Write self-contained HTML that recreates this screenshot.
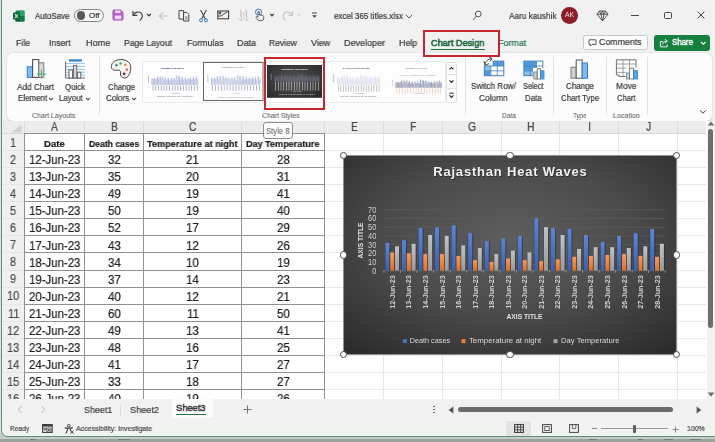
<!DOCTYPE html>
<html lang="en"><head><meta charset="utf-8"><title>excel 365 titles.xlsx - Excel</title>
<style>
html,body{margin:0;padding:0;}
body{width:715px;height:442px;position:relative;overflow:hidden;background:#f1f1f1;font-family:"Liberation Sans",sans-serif;}
.t{will-change:transform;-webkit-text-stroke:0.22px currentColor;position:absolute;white-space:nowrap;line-height:1;transform-origin:0 50%;display:block;}
.r{position:absolute;display:block;box-sizing:border-box;}
svg{overflow:visible;will-change:transform;}
svg text{font-family:"Liberation Sans",sans-serif;}
</style></head><body>
<div id="titlebar">
<div class="r" style="left:0.00px;top:0.00px;width:715.00px;height:54.00px;background:#f1f1f1;"></div>
<svg class="r" style="left:12.50px;top:9.50px;" width="12" height="12" viewBox="0 0 12 12"><rect x="2.5" y="0.5" width="9" height="11" rx="1.2" fill="#1a8a50"/><rect x="7" y="0.5" width="4.5" height="5.5" fill="#27a562"/><rect x="2.5" y="6" width="4.5" height="5.5" fill="#185c37"/><rect x="7" y="6" width="4.5" height="5.5" rx="0" fill="#107c41"/><rect x="0" y="2.6" width="7" height="7" rx="0.9" fill="#0f6b3a"/><text x="3.3" y="8.1" font-size="5.6" font-weight="bold" fill="#fff" text-anchor="middle">X</text></svg>
<span class="t" style="left:35.00px;top:11.70px;font-size:9.00px;color:#3a3a3a;transform:scaleX(0.8840);">AutoSave</span>
<div class="r" style="left:74.00px;top:8.60px;width:29.50px;height:13.80px;background:#f6f6f6;border:1px solid #858585;border-radius:7px;"></div>
<div class="r" style="left:77.30px;top:11.40px;width:8.20px;height:8.20px;background:#5a5a5a;border-radius:50%;"></div>
<span class="t" style="left:88.50px;top:12.19px;font-size:8.00px;color:#3a3a3a;transform:scaleX(0.9978);">Off</span>
<svg class="r" style="left:111.50px;top:9.00px;" width="12" height="12" viewBox="0 0 12 12"><path d="M1 1.8 a0.8 0.8 0 0 1 .8 -.8 H8.6 L11 3.4 V10.2 a.8 .8 0 0 1 -.8 .8 H1.8 a.8 .8 0 0 1 -.8 -.8 Z" fill="#b866c6" stroke="#a752b6" stroke-width="1"/><rect x="3" y="1.4" width="5.4" height="2.6" fill="#f0d9f3"/><rect x="2.8" y="6.6" width="6.4" height="3.6" fill="#f0d9f3"/></svg>
<svg class="r" style="left:131.00px;top:9.00px;" width="14" height="13" viewBox="0 0 14 13"><path d="M2 2 V6.3 H6.3" fill="none" stroke="#444" stroke-width="1.2"/><path d="M2.3 6 C4 3 8 2 10.3 4.3 C12.2 6.4 11.4 9.3 8.6 11.6" fill="none" stroke="#444" stroke-width="1.2"/></svg>
<svg class="r" style="left:146.00px;top:13.00px;" width="6" height="4" viewBox="0 0 6 4"><path d="M1.2 1 L3 2.8 L4.8 1" fill="none" stroke="#444" stroke-width="1.3"/></svg>
<svg class="r" style="left:157.50px;top:10.50px;" width="11" height="10" viewBox="0 0 11 10"><path d="M10 5 H1.5 M5 1.3 L1.3 5 L5 8.7" fill="none" stroke="#c2c2c2" stroke-width="1.1"/></svg>
<svg class="r" style="left:177.50px;top:9.00px;" width="12" height="13" viewBox="0 0 12 13"><path d="M1 1.6 H5.6 V10 H1 Z" fill="none" stroke="#444" stroke-width="1"/><path d="M5.6 3.4 H8.8 L10.8 5.4 V12 H5.6 Z" fill="#f1f1f1" stroke="#444" stroke-width="1"/><path d="M7.2 8 H9.4 M7.2 9.8 H9.4" stroke="#444" stroke-width=".8"/></svg>
<svg class="r" style="left:198.00px;top:8.50px;" width="11" height="14" viewBox="0 0 11 14"><path d="M2.6 1 L7.4 10 M8.4 1 L3.6 10" fill="none" stroke="#444" stroke-width="1.1"/><circle cx="3" cy="11.3" r="1.5" fill="none" stroke="#2b7bc4" stroke-width="1"/><circle cx="8" cy="11.3" r="1.5" fill="none" stroke="#2b7bc4" stroke-width="1"/></svg>
<svg class="r" style="left:217.00px;top:10.00px;" width="13" height="10" viewBox="0 0 13 10"><rect x=".8" y="1" width="10.8" height="7.8" fill="none" stroke="#444" stroke-width="1.1"/><path d="M1 6 H4 L10.6 1.6" fill="none" stroke="#444" stroke-width="1"/><rect x="1.6" y="1.6" width="2.6" height="2.6" fill="#555"/></svg>
<svg class="r" style="left:237.50px;top:9.00px;" width="12" height="13" viewBox="0 0 12 13"><path d="M3 1 C1.6 2.4 4.4 3.6 3 5 C1.6 6.4 4.4 7.6 3 9 M8.4 1 C7 2.4 9.8 3.6 8.4 5 C7 6.4 9.8 7.6 8.4 9" fill="none" stroke="#bdbdbd" stroke-width="1.1"/><path d="M1 9.4 L3 11.8 L5 9.4 M6.4 9.4 L8.4 11.8 L10.4 9.4" fill="none" stroke="#bdbdbd" stroke-width="1"/><path d="M5.6 3 V8" stroke="#c8c8c8" stroke-width=".9"/></svg>
<svg class="r" style="left:254.00px;top:8.00px;" width="12" height="14" viewBox="0 0 12 14"><circle cx="4.6" cy="4.2" r="3.1" fill="none" stroke="#3f7fc0" stroke-width="1"/><circle cx="4.6" cy="4.2" r="1.1" fill="#3f7fc0"/>
<path d="M4 4.6 V9.2 L2.6 8.6 C1.8 8.6 1.8 9.6 2.4 10.2 L4.6 12.6 H8.6 C9.6 12 9.8 10.4 9.6 8.4 C9.4 7.4 8 7.4 7 7.2 L5.4 7 V4.6 C5.4 3.8 4 3.8 4 4.6 Z" fill="#f4f4f4" stroke="#555" stroke-width=".9" stroke-linejoin="round"/></svg>
<svg class="r" style="left:269.40px;top:12.60px;" width="6" height="4" viewBox="0 0 6 4"><path d="M1.2 1 L3 2.8 L4.8 1" fill="none" stroke="#444" stroke-width="1.3"/></svg>
<svg class="r" style="left:281.00px;top:9.00px;" width="13" height="13" viewBox="0 0 13 13"><path d="M11.4 2 V6.3 H7.1" fill="none" stroke="#c2c2c2" stroke-width="1.1"/><path d="M11.1 6 C9.4 3 5.4 2 3.1 4.3 C1.2 6.4 2 9.3 4.8 11.6" fill="none" stroke="#c2c2c2" stroke-width="1.1"/></svg>
<svg class="r" style="left:296.00px;top:13.00px;" width="6" height="4" viewBox="0 0 6 4"><path d="M1.2 1 L3 2.8 L4.8 1" fill="none" stroke="#d4d4d4" stroke-width="1.2"/></svg>
<svg class="r" style="left:310.50px;top:12.00px;" width="7" height="7" viewBox="0 0 7 7"><path d="M1 1 H6" stroke="#444" stroke-width="1"/><path d="M1.2 3.2 H5.8 L3.5 5.8 Z" fill="#444"/></svg>
<span class="t" style="left:333.50px;top:11.70px;font-size:9.00px;color:#3a3a3a;transform:scaleX(0.8899);">excel 365 titles.xlsx</span>
<svg class="r" style="left:404.80px;top:14.00px;" width="8" height="5" viewBox="0 0 8 5"><path d="M.8 .8 L4 4 L7.2 .8" fill="none" stroke="#555" stroke-width="1"/></svg>
<svg class="r" style="left:470.50px;top:9.50px;" width="11" height="12" viewBox="0 0 11 12"><circle cx="7.2" cy="4" r="2.9" fill="none" stroke="#4f4f4f" stroke-width=".95"/><path d="M5.2 6.2 L2.2 9.8" stroke="#4f4f4f" stroke-width="1"/></svg>
<span class="t" style="left:508.50px;top:11.70px;font-size:9.00px;color:#3a3a3a;transform:scaleX(0.9130);">Aaru kaushik</span>
<div class="r" style="left:561.30px;top:7.10px;width:16.60px;height:16.60px;background:#8c1d2b;border-radius:50%;"></div>
<span class="t" style="left:565.00px;top:12.47px;font-size:6.40px;color:#f3dfe2;transform:scaleX(1.0775);-webkit-text-stroke:0;">AK</span>
<svg class="r" style="left:596.00px;top:9.50px;" width="13" height="12" viewBox="0 0 13 12"><path d="M3.4 1 H9.6 L12 4.2 L6.5 11 L1 4.2 Z M1 4.2 H12 M3.4 1 L5 4.2 L6.5 11 L8 4.2 L9.6 1 M5 4.2 L6.5 1 L8 4.2" fill="none" stroke="#444" stroke-width=".9" stroke-linejoin="round"/></svg>
<div class="r" style="left:631.00px;top:15.00px;width:8.40px;height:1.00px;background:#444;"></div>
<div class="r" style="left:664.20px;top:11.60px;width:7.60px;height:7.40px;background:transparent;border:1px solid #444;border-radius:1.5px;"></div>
<svg class="r" style="left:697.00px;top:11.00px;" width="8" height="8" viewBox="0 0 8 8"><path d="M.6 .6 L7.4 7.4 M7.4 .6 L.6 7.4" stroke="#444" stroke-width="1"/></svg>
</div>
<div id="tabs">
<span class="t" style="left:16.30px;top:38.81px;font-size:9.20px;color:#3a3a3a;transform:scaleX(0.9444);">File</span>
<span class="t" style="left:48.80px;top:38.81px;font-size:9.20px;color:#3a3a3a;transform:scaleX(0.9387);">Insert</span>
<span class="t" style="left:85.60px;top:38.81px;font-size:9.20px;color:#3a3a3a;transform:scaleX(0.9861);">Home</span>
<span class="t" style="left:124.30px;top:38.81px;font-size:9.20px;color:#3a3a3a;transform:scaleX(0.9310);">Page Layout</span>
<span class="t" style="left:187.40px;top:38.81px;font-size:9.20px;color:#3a3a3a;transform:scaleX(0.9546);">Formulas</span>
<span class="t" style="left:237.40px;top:38.81px;font-size:9.20px;color:#3a3a3a;transform:scaleX(0.9777);">Data</span>
<span class="t" style="left:269.40px;top:38.81px;font-size:9.20px;color:#3a3a3a;transform:scaleX(0.9216);">Review</span>
<span class="t" style="left:310.60px;top:38.81px;font-size:9.20px;color:#3a3a3a;transform:scaleX(0.9709);">View</span>
<span class="t" style="left:344.00px;top:38.81px;font-size:9.20px;color:#3a3a3a;transform:scaleX(0.9824);">Developer</span>
<span class="t" style="left:398.80px;top:38.81px;font-size:9.20px;color:#3a3a3a;transform:scaleX(0.9619);">Help</span>
<span class="t" style="left:498.00px;top:38.81px;font-size:9.20px;color:#217346;transform:scaleX(0.9747);">Format</span>
<span class="t" style="left:431.00px;top:38.81px;font-size:9.20px;color:#1b653c;transform:scaleX(0.9946);-webkit-text-stroke:0.55px currentColor;">Chart Design</span>
<div class="r" style="left:431.00px;top:48.60px;width:53.60px;height:1.50px;background:#217346;"></div>
<div class="r" style="left:583.00px;top:35.00px;width:65.00px;height:15.40px;background:#fdfdfd;border:1px solid #c8c8c8;border-radius:2.5px;"></div>
<svg class="r" style="left:587.60px;top:38.50px;" width="9" height="8" viewBox="0 0 9 8"><path d="M1 .8 H8 V5.4 H4 L2.4 7 V5.4 H1 Z" fill="none" stroke="#444" stroke-width=".9" stroke-linejoin="round"/></svg>
<span class="t" style="left:599.00px;top:38.31px;font-size:9.20px;color:#3a3a3a;transform:scaleX(0.9578);">Comments</span>
<div class="r" style="left:654.30px;top:34.80px;width:55.60px;height:15.80px;background:#15803f;border-radius:3px;"></div>
<svg class="r" style="left:658.50px;top:37.50px;" width="10" height="10" viewBox="0 0 10 10"><path d="M4.2 3.4 H1.4 V8.8 H8.2 V6.6" fill="none" stroke="#fff" stroke-width=".9"/><path d="M3.6 6.6 C3.8 4.4 5.4 3.2 7.4 3.2 M6 1.2 L8.4 3.2 L6 5.2" fill="none" stroke="#fff" stroke-width=".9"/></svg>
<span class="t" style="left:672.00px;top:38.31px;font-size:9.20px;color:#fff;transform:scaleX(0.8554);-webkit-text-stroke:0.5px currentColor;">Share</span>
<svg class="r" style="left:700.00px;top:40.50px;" width="7" height="5" viewBox="0 0 7 5"><path d="M1 1 L3.3 3.2 L5.6 1" fill="none" stroke="#fff" stroke-width="1.1"/></svg>
</div>
<div id="ribbon">
<div class="r" style="left:7.00px;top:53.40px;width:705.00px;height:67.80px;background:#fcfcfc;border-radius:6px;box-shadow:0 0.5px 2px rgba(0,0,0,.18);"></div>
<svg class="r" style="left:26.00px;top:58.00px;" width="22" height="22" viewBox="0 0 22 22"><rect x="1.2" y="8.8" width="5.4" height="10.6" fill="#86bdf0" stroke="#2f7fd0" stroke-width="1"/>
<rect x="6.6" y="1.6" width="6.2" height="17.8" fill="#fefefe" stroke="#4f4f4f" stroke-width="1.1"/>
<rect x="12.8" y="4.8" width="5" height="14.6" fill="#dcdcdc" stroke="#7a7a7a" stroke-width="1"/>
<path d="M15.5 11.5 V20.8 M11 16.1 H20.2" stroke="#58b47c" stroke-width="1.1"/></svg>
<span class="t" style="left:17.20px;top:82.71px;font-size:9.20px;color:#3a3a3a;transform:scaleX(0.8932);">Add Chart</span>
<span class="t" style="left:17.60px;top:94.11px;font-size:9.20px;color:#3a3a3a;transform:scaleX(0.8652);">Element</span>
<svg class="r" style="left:48.00px;top:97.30px;" width="6" height="4" viewBox="0 0 6 4"><path d="M1 .9 L3 2.9 L5 .9" fill="none" stroke="#555" stroke-width="1.25"/></svg>
<svg class="r" style="left:65.00px;top:58.00px;" width="21" height="21" viewBox="0 0 21 21"><rect x="3.9" y="1.2" width="13" height="2.4" fill="#3b8cc6"/>
<path d="M1 5.6 H20 M1 8.5 H20 M1 11.4 H20 M1 14.2 H20 M1 17.1 H20" stroke="#93c4ec" stroke-width="1"/>
<path d="M.6 3.6 V20 H20" fill="none" stroke="#666" stroke-width="1"/>
<rect x="4" y="12" width="3.6" height="8" fill="#fefefe" stroke="#555" stroke-width=".9"/>
<rect x="8.4" y="7.4" width="3.4" height="12.6" fill="#d6d6d6" stroke="#666" stroke-width=".9"/>
<rect x="12.4" y="14.2" width="3.4" height="5.8" fill="#fefefe" stroke="#555" stroke-width=".9"/></svg>
<span class="t" style="left:65.20px;top:82.71px;font-size:9.20px;color:#3a3a3a;transform:scaleX(0.8505);">Quick</span>
<span class="t" style="left:59.40px;top:94.11px;font-size:9.20px;color:#3a3a3a;transform:scaleX(0.8616);">Layout</span>
<svg class="r" style="left:85.00px;top:97.30px;" width="6" height="4" viewBox="0 0 6 4"><path d="M1 .9 L3 2.9 L5 .9" fill="none" stroke="#555" stroke-width="1.25"/></svg>
<span class="t" style="left:32.20px;top:111.79px;font-size:7.60px;color:#5f5f5f;transform:scaleX(0.9173);-webkit-text-stroke:0.08px currentColor;">Chart Layouts</span>
<div class="r" style="left:99.00px;top:57.00px;width:1.00px;height:58.00px;background:#e2e2e2;"></div>
<svg class="r" style="left:111.00px;top:59.00px;" width="21" height="20" viewBox="0 0 21 20"><defs><linearGradient id="pg" x1="0" y1="0" x2="1" y2="1"><stop offset="0" stop-color="#e6f6ee"/><stop offset=".55" stop-color="#fbf6f2"/><stop offset="1" stop-color="#f9dfe8"/></linearGradient></defs>
<path d="M10 .5 C4 .5 .3 4 .3 7.5 C.3 10.5 3 11.8 6 11.2 C8.5 10.7 10 11.8 9.6 14 C9 17 10.8 19 13.5 19 C17.5 19 19.8 13.5 19.8 9 C19.8 4 16 .5 10 .5 Z" fill="url(#pg)" stroke="#484848" stroke-width="1"/>
<circle cx="5.4" cy="6.3" r="1.3" fill="#3f8f8c"/><circle cx="9.5" cy="4.5" r="1.3" fill="#5b9c6c"/><circle cx="14.2" cy="5.9" r="1.3" fill="#e0914c"/><circle cx="15.9" cy="10.6" r="1.3" fill="#d9687b"/><circle cx="13.1" cy="14.8" r="1.4" fill="#4b3a6b"/></svg>
<span class="t" style="left:107.80px;top:82.71px;font-size:9.20px;color:#3a3a3a;transform:scaleX(0.8378);">Change</span>
<span class="t" style="left:105.80px;top:94.11px;font-size:9.20px;color:#3a3a3a;transform:scaleX(0.8726);">Colors</span>
<svg class="r" style="left:131.00px;top:97.30px;" width="6" height="4" viewBox="0 0 6 4"><path d="M1 .9 L3 2.9 L5 .9" fill="none" stroke="#555" stroke-width="1.25"/></svg>
<div class="r" style="left:141.50px;top:60.80px;width:304.50px;height:42.00px;background:#fdfdfd;border:1px solid #eaeaea;border-radius:2px 0 0 2px;"></div>
<svg class="r" style="left:143.50px;top:62.50px;" width="57" height="37.5" viewBox="0 0 57 37.5"><rect x=".5" y=".5" width="56" height="36.5" fill="#fdfdfd"/><text x="28.5" y="6.0" font-size="2.15" font-weight="bold" fill="#2f3558" text-anchor="middle">Rajasthan Heat Waves</text><g opacity="1"><rect x="7.58" y="15.28" width="0.72" height="6.66" fill="#97a6d0"/><rect x="8.41" y="16.42" width="0.72" height="5.52" fill="#bcc2dd"/><rect x="9.24" y="15.69" width="0.72" height="6.25" fill="#b3bbd8"/><rect x="10.34" y="14.96" width="0.72" height="6.97" fill="#97a6d0"/><rect x="11.17" y="16.52" width="0.72" height="5.42" fill="#bcc2dd"/><rect x="12.00" y="15.38" width="0.72" height="6.56" fill="#b3bbd8"/><rect x="13.11" y="13.51" width="0.72" height="8.42" fill="#97a6d0"/><rect x="13.94" y="16.62" width="0.72" height="5.32" fill="#bcc2dd"/><rect x="14.77" y="14.34" width="0.72" height="7.59" fill="#b3bbd8"/><rect x="15.87" y="13.41" width="0.72" height="8.53" fill="#97a6d0"/><rect x="16.70" y="16.62" width="0.72" height="5.32" fill="#bcc2dd"/><rect x="17.53" y="14.45" width="0.72" height="7.49" fill="#b3bbd8"/><rect x="18.64" y="13.20" width="0.72" height="8.73" fill="#97a6d0"/><rect x="19.47" y="16.83" width="0.72" height="5.11" fill="#bcc2dd"/><rect x="20.30" y="15.59" width="0.72" height="6.35" fill="#b3bbd8"/><rect x="21.41" y="14.14" width="0.72" height="7.80" fill="#97a6d0"/><rect x="22.24" y="17.35" width="0.72" height="4.59" fill="#bcc2dd"/><rect x="23.07" y="15.90" width="0.72" height="6.04" fill="#b3bbd8"/><rect x="24.17" y="15.07" width="0.72" height="6.87" fill="#97a6d0"/><rect x="25.00" y="17.55" width="0.72" height="4.38" fill="#bcc2dd"/><rect x="25.83" y="16.62" width="0.72" height="5.32" fill="#b3bbd8"/><rect x="26.94" y="14.76" width="0.72" height="7.18" fill="#97a6d0"/><rect x="27.77" y="17.14" width="0.72" height="4.80" fill="#bcc2dd"/><rect x="28.60" y="16.21" width="0.72" height="5.73" fill="#b3bbd8"/><rect x="29.71" y="14.45" width="0.72" height="7.49" fill="#97a6d0"/><rect x="30.54" y="17.35" width="0.72" height="4.59" fill="#bcc2dd"/><rect x="31.37" y="16.42" width="0.72" height="5.52" fill="#b3bbd8"/><rect x="32.47" y="12.38" width="0.72" height="9.56" fill="#97a6d0"/><rect x="33.30" y="17.45" width="0.72" height="4.49" fill="#bcc2dd"/><rect x="34.13" y="13.41" width="0.72" height="8.53" fill="#b3bbd8"/><rect x="35.24" y="13.51" width="0.72" height="8.42" fill="#97a6d0"/><rect x="36.07" y="17.24" width="0.72" height="4.69" fill="#bcc2dd"/><rect x="36.90" y="14.34" width="0.72" height="7.59" fill="#b3bbd8"/><rect x="38.00" y="13.62" width="0.72" height="8.32" fill="#97a6d0"/><rect x="38.83" y="16.93" width="0.72" height="5.00" fill="#bcc2dd"/><rect x="39.66" y="16.00" width="0.72" height="5.94" fill="#b3bbd8"/><rect x="40.77" y="14.34" width="0.72" height="7.59" fill="#97a6d0"/><rect x="41.60" y="16.83" width="0.72" height="5.11" fill="#bcc2dd"/><rect x="42.43" y="15.79" width="0.72" height="6.14" fill="#b3bbd8"/><rect x="43.54" y="15.17" width="0.72" height="6.77" fill="#97a6d0"/><rect x="44.37" y="16.73" width="0.72" height="5.21" fill="#bcc2dd"/><rect x="45.20" y="15.79" width="0.72" height="6.14" fill="#b3bbd8"/><rect x="46.30" y="14.45" width="0.72" height="7.49" fill="#97a6d0"/><rect x="47.13" y="16.62" width="0.72" height="5.32" fill="#bcc2dd"/><rect x="47.96" y="15.90" width="0.72" height="6.04" fill="#b3bbd8"/><rect x="49.07" y="14.14" width="0.72" height="7.80" fill="#97a6d0"/><rect x="49.90" y="16.83" width="0.72" height="5.11" fill="#bcc2dd"/><rect x="50.73" y="15.69" width="0.72" height="6.25" fill="#b3bbd8"/><rect x="51.83" y="13.62" width="0.72" height="8.32" fill="#97a6d0"/><rect x="52.66" y="16.93" width="0.72" height="5.00" fill="#bcc2dd"/><rect x="53.49" y="15.38" width="0.72" height="6.56" fill="#b3bbd8"/></g><rect x="8.57" y="22.34" width=".75" height="5.25" fill="#6a7398" opacity="0.7"/><rect x="11.34" y="22.34" width=".75" height="5.25" fill="#6a7398" opacity="0.7"/><rect x="14.10" y="22.34" width=".75" height="5.25" fill="#6a7398" opacity="0.7"/><rect x="16.87" y="22.34" width=".75" height="5.25" fill="#6a7398" opacity="0.7"/><rect x="19.64" y="22.34" width=".75" height="5.25" fill="#6a7398" opacity="0.7"/><rect x="22.40" y="22.34" width=".75" height="5.25" fill="#6a7398" opacity="0.7"/><rect x="25.17" y="22.34" width=".75" height="5.25" fill="#6a7398" opacity="0.7"/><rect x="27.94" y="22.34" width=".75" height="5.25" fill="#6a7398" opacity="0.7"/><rect x="30.70" y="22.34" width=".75" height="5.25" fill="#6a7398" opacity="0.7"/><rect x="33.47" y="22.34" width=".75" height="5.25" fill="#6a7398" opacity="0.7"/><rect x="36.23" y="22.34" width=".75" height="5.25" fill="#6a7398" opacity="0.7"/><rect x="39.00" y="22.34" width=".75" height="5.25" fill="#6a7398" opacity="0.7"/><rect x="41.77" y="22.34" width=".75" height="5.25" fill="#6a7398" opacity="0.7"/><rect x="44.53" y="22.34" width=".75" height="5.25" fill="#6a7398" opacity="0.7"/><rect x="47.30" y="22.34" width=".75" height="5.25" fill="#6a7398" opacity="0.7"/><rect x="50.06" y="22.34" width=".75" height="5.25" fill="#6a7398" opacity="0.7"/><rect x="52.83" y="22.34" width=".75" height="5.25" fill="#6a7398" opacity="0.7"/><rect x="4.01" y="12.38" width=".8" height="7.65" fill="#2f3558" opacity=".4"/><text x="30.9225" y="31.1" font-size="1.8" fill="#2f3558" text-anchor="middle" opacity=".7">AXIS TITLE</text><text x="30.9225" y="34.3" font-size="1.5" fill="#2f3558" text-anchor="middle" opacity=".8">Death cases &#160; Temperature at night &#160; Day Temperature</text></svg>
<svg class="r" style="left:202.50px;top:61.50px;" width="60.5" height="39" viewBox="0 0 60.5 39"><rect x=".5" y=".5" width="59.5" height="38" fill="#fdfdfd" stroke="#666" stroke-width="1"/><text x="30.25" y="6.2" font-size="2.15" fill="#6a6a72" text-anchor="middle">Rajasthan Heat Waves</text><g opacity="1"><rect x="8.04" y="15.89" width="0.76" height="6.93" fill="#a3b1d6"/><rect x="8.92" y="17.07" width="0.76" height="5.74" fill="#c6cbe0"/><rect x="9.80" y="16.32" width="0.76" height="6.50" fill="#bec5dc"/><rect x="10.98" y="15.56" width="0.76" height="7.25" fill="#a3b1d6"/><rect x="11.86" y="17.18" width="0.76" height="5.64" fill="#c6cbe0"/><rect x="12.74" y="15.99" width="0.76" height="6.82" fill="#bec5dc"/><rect x="13.91" y="14.06" width="0.76" height="8.76" fill="#a3b1d6"/><rect x="14.79" y="17.29" width="0.76" height="5.53" fill="#c6cbe0"/><rect x="15.67" y="14.92" width="0.76" height="7.90" fill="#bec5dc"/><rect x="16.85" y="13.95" width="0.76" height="8.87" fill="#a3b1d6"/><rect x="17.73" y="17.29" width="0.76" height="5.53" fill="#c6cbe0"/><rect x="18.61" y="15.02" width="0.76" height="7.79" fill="#bec5dc"/><rect x="19.79" y="13.73" width="0.76" height="9.08" fill="#a3b1d6"/><rect x="20.67" y="17.50" width="0.76" height="5.31" fill="#c6cbe0"/><rect x="21.55" y="16.21" width="0.76" height="6.61" fill="#bec5dc"/><rect x="22.72" y="14.70" width="0.76" height="8.11" fill="#a3b1d6"/><rect x="23.60" y="18.04" width="0.76" height="4.77" fill="#c6cbe0"/><rect x="24.48" y="16.53" width="0.76" height="6.28" fill="#bec5dc"/><rect x="25.66" y="15.67" width="0.76" height="7.14" fill="#a3b1d6"/><rect x="26.54" y="18.26" width="0.76" height="4.56" fill="#c6cbe0"/><rect x="27.42" y="17.29" width="0.76" height="5.53" fill="#bec5dc"/><rect x="28.59" y="15.35" width="0.76" height="7.47" fill="#a3b1d6"/><rect x="29.47" y="17.83" width="0.76" height="4.99" fill="#c6cbe0"/><rect x="30.35" y="16.86" width="0.76" height="5.96" fill="#bec5dc"/><rect x="31.53" y="15.02" width="0.76" height="7.79" fill="#a3b1d6"/><rect x="32.41" y="18.04" width="0.76" height="4.77" fill="#c6cbe0"/><rect x="33.29" y="17.07" width="0.76" height="5.74" fill="#bec5dc"/><rect x="34.47" y="12.87" width="0.76" height="9.94" fill="#a3b1d6"/><rect x="35.35" y="18.15" width="0.76" height="4.67" fill="#c6cbe0"/><rect x="36.23" y="13.95" width="0.76" height="8.87" fill="#bec5dc"/><rect x="37.40" y="14.06" width="0.76" height="8.76" fill="#a3b1d6"/><rect x="38.28" y="17.93" width="0.76" height="4.88" fill="#c6cbe0"/><rect x="39.16" y="14.92" width="0.76" height="7.90" fill="#bec5dc"/><rect x="40.34" y="14.16" width="0.76" height="8.65" fill="#a3b1d6"/><rect x="41.22" y="17.61" width="0.76" height="5.20" fill="#c6cbe0"/><rect x="42.10" y="16.64" width="0.76" height="6.17" fill="#bec5dc"/><rect x="43.27" y="14.92" width="0.76" height="7.90" fill="#a3b1d6"/><rect x="44.15" y="17.50" width="0.76" height="5.31" fill="#c6cbe0"/><rect x="45.04" y="16.43" width="0.76" height="6.39" fill="#bec5dc"/><rect x="46.21" y="15.78" width="0.76" height="7.04" fill="#a3b1d6"/><rect x="47.09" y="17.39" width="0.76" height="5.42" fill="#c6cbe0"/><rect x="47.97" y="16.43" width="0.76" height="6.39" fill="#bec5dc"/><rect x="49.15" y="15.02" width="0.76" height="7.79" fill="#a3b1d6"/><rect x="50.03" y="17.29" width="0.76" height="5.53" fill="#c6cbe0"/><rect x="50.91" y="16.53" width="0.76" height="6.28" fill="#bec5dc"/><rect x="52.08" y="14.70" width="0.76" height="8.11" fill="#a3b1d6"/><rect x="52.96" y="17.50" width="0.76" height="5.31" fill="#c6cbe0"/><rect x="53.84" y="16.32" width="0.76" height="6.50" fill="#bec5dc"/><rect x="55.02" y="14.16" width="0.76" height="8.65" fill="#a3b1d6"/><rect x="55.90" y="17.61" width="0.76" height="5.20" fill="#c6cbe0"/><rect x="56.78" y="15.99" width="0.76" height="6.82" fill="#bec5dc"/></g><rect x="9.10" y="23.21" width=".75" height="5.46" fill="#6a7398" opacity="0.65"/><rect x="12.03" y="23.21" width=".75" height="5.46" fill="#6a7398" opacity="0.65"/><rect x="14.97" y="23.21" width=".75" height="5.46" fill="#6a7398" opacity="0.65"/><rect x="17.91" y="23.21" width=".75" height="5.46" fill="#6a7398" opacity="0.65"/><rect x="20.84" y="23.21" width=".75" height="5.46" fill="#6a7398" opacity="0.65"/><rect x="23.78" y="23.21" width=".75" height="5.46" fill="#6a7398" opacity="0.65"/><rect x="26.71" y="23.21" width=".75" height="5.46" fill="#6a7398" opacity="0.65"/><rect x="29.65" y="23.21" width=".75" height="5.46" fill="#6a7398" opacity="0.65"/><rect x="32.59" y="23.21" width=".75" height="5.46" fill="#6a7398" opacity="0.65"/><rect x="35.52" y="23.21" width=".75" height="5.46" fill="#6a7398" opacity="0.65"/><rect x="38.46" y="23.21" width=".75" height="5.46" fill="#6a7398" opacity="0.65"/><rect x="41.39" y="23.21" width=".75" height="5.46" fill="#6a7398" opacity="0.65"/><rect x="44.33" y="23.21" width=".75" height="5.46" fill="#6a7398" opacity="0.65"/><rect x="47.27" y="23.21" width=".75" height="5.46" fill="#6a7398" opacity="0.65"/><rect x="50.20" y="23.21" width=".75" height="5.46" fill="#6a7398" opacity="0.65"/><rect x="53.14" y="23.21" width=".75" height="5.46" fill="#6a7398" opacity="0.65"/><rect x="56.07" y="23.21" width=".75" height="5.46" fill="#6a7398" opacity="0.65"/><rect x="4.46" y="12.87" width=".8" height="7.96" fill="#6a6a72" opacity=".4"/><text x="32.8212" y="32.4" font-size="1.8" fill="#6a6a72" text-anchor="middle" opacity=".7">AXIS TITLE</text><text x="32.8212" y="35.7" font-size="1.5" fill="#6a6a72" text-anchor="middle" opacity=".8">Death cases &#160; Temperature at night &#160; Day Temperature</text></svg>
<svg class="r" style="left:329.50px;top:62.50px;" width="52.5" height="37.5" viewBox="0 0 52.5 37.5"><rect x=".5" y=".5" width="51.5" height="36.5" fill="#fdfdfd"/><text x="26.25" y="6.0" font-size="2.1" font-weight="bold" fill="#3e3e3e" text-anchor="middle">RAJASTHAN HEAT WAVES</text><g opacity="1"><rect x="6.98" y="14.49" width="0.66" height="7.45" fill="#d3d8e8"/><rect x="7.74" y="15.77" width="0.66" height="6.17" fill="#e4e5ee"/><rect x="8.51" y="14.96" width="0.66" height="6.98" fill="#dddfea"/><rect x="9.53" y="14.14" width="0.66" height="7.79" fill="#d3d8e8"/><rect x="10.29" y="15.88" width="0.66" height="6.06" fill="#e4e5ee"/><rect x="11.05" y="14.61" width="0.66" height="7.33" fill="#dddfea"/><rect x="12.07" y="12.52" width="0.66" height="9.41" fill="#d3d8e8"/><rect x="12.84" y="16.00" width="0.66" height="5.94" fill="#e4e5ee"/><rect x="13.60" y="13.45" width="0.66" height="8.49" fill="#dddfea"/><rect x="14.62" y="12.41" width="0.66" height="9.53" fill="#d3d8e8"/><rect x="15.39" y="16.00" width="0.66" height="5.94" fill="#e4e5ee"/><rect x="16.15" y="13.57" width="0.66" height="8.37" fill="#dddfea"/><rect x="17.17" y="12.18" width="0.66" height="9.76" fill="#d3d8e8"/><rect x="17.93" y="16.23" width="0.66" height="5.71" fill="#e4e5ee"/><rect x="18.70" y="14.84" width="0.66" height="7.10" fill="#dddfea"/><rect x="19.72" y="13.22" width="0.66" height="8.72" fill="#d3d8e8"/><rect x="20.48" y="16.81" width="0.66" height="5.13" fill="#e4e5ee"/><rect x="21.25" y="15.19" width="0.66" height="6.75" fill="#dddfea"/><rect x="22.26" y="14.26" width="0.66" height="7.68" fill="#d3d8e8"/><rect x="23.03" y="17.04" width="0.66" height="4.90" fill="#e4e5ee"/><rect x="23.79" y="16.00" width="0.66" height="5.94" fill="#dddfea"/><rect x="24.81" y="13.91" width="0.66" height="8.02" fill="#d3d8e8"/><rect x="25.58" y="16.58" width="0.66" height="5.36" fill="#e4e5ee"/><rect x="26.34" y="15.53" width="0.66" height="6.40" fill="#dddfea"/><rect x="27.36" y="13.57" width="0.66" height="8.37" fill="#d3d8e8"/><rect x="28.12" y="16.81" width="0.66" height="5.13" fill="#e4e5ee"/><rect x="28.89" y="15.77" width="0.66" height="6.17" fill="#dddfea"/><rect x="29.91" y="11.25" width="0.66" height="10.69" fill="#d3d8e8"/><rect x="30.67" y="16.92" width="0.66" height="5.01" fill="#e4e5ee"/><rect x="31.44" y="12.41" width="0.66" height="9.53" fill="#dddfea"/><rect x="32.46" y="12.52" width="0.66" height="9.41" fill="#d3d8e8"/><rect x="33.22" y="16.69" width="0.66" height="5.25" fill="#e4e5ee"/><rect x="33.98" y="13.45" width="0.66" height="8.49" fill="#dddfea"/><rect x="35.00" y="12.64" width="0.66" height="9.30" fill="#d3d8e8"/><rect x="35.77" y="16.34" width="0.66" height="5.59" fill="#e4e5ee"/><rect x="36.53" y="15.30" width="0.66" height="6.64" fill="#dddfea"/><rect x="37.55" y="13.45" width="0.66" height="8.49" fill="#d3d8e8"/><rect x="38.32" y="16.23" width="0.66" height="5.71" fill="#e4e5ee"/><rect x="39.08" y="15.07" width="0.66" height="6.87" fill="#dddfea"/><rect x="40.10" y="14.38" width="0.66" height="7.56" fill="#d3d8e8"/><rect x="40.86" y="16.11" width="0.66" height="5.82" fill="#e4e5ee"/><rect x="41.63" y="15.07" width="0.66" height="6.87" fill="#dddfea"/><rect x="42.65" y="13.57" width="0.66" height="8.37" fill="#d3d8e8"/><rect x="43.41" y="16.00" width="0.66" height="5.94" fill="#e4e5ee"/><rect x="44.18" y="15.19" width="0.66" height="6.75" fill="#dddfea"/><rect x="45.19" y="13.22" width="0.66" height="8.72" fill="#d3d8e8"/><rect x="45.96" y="16.23" width="0.66" height="5.71" fill="#e4e5ee"/><rect x="46.72" y="14.96" width="0.66" height="6.98" fill="#dddfea"/><rect x="47.74" y="12.64" width="0.66" height="9.30" fill="#d3d8e8"/><rect x="48.51" y="16.34" width="0.66" height="5.59" fill="#e4e5ee"/><rect x="49.27" y="14.61" width="0.66" height="7.33" fill="#dddfea"/></g><rect x="7.90" y="22.34" width=".75" height="6.38" fill="#80808e" opacity="0.6"/><rect x="10.44" y="22.34" width=".75" height="6.38" fill="#80808e" opacity="0.6"/><rect x="12.99" y="22.34" width=".75" height="6.38" fill="#80808e" opacity="0.6"/><rect x="15.54" y="22.34" width=".75" height="6.38" fill="#80808e" opacity="0.6"/><rect x="18.09" y="22.34" width=".75" height="6.38" fill="#80808e" opacity="0.6"/><rect x="20.63" y="22.34" width=".75" height="6.38" fill="#80808e" opacity="0.6"/><rect x="23.18" y="22.34" width=".75" height="6.38" fill="#80808e" opacity="0.6"/><rect x="25.73" y="22.34" width=".75" height="6.38" fill="#80808e" opacity="0.6"/><rect x="28.28" y="22.34" width=".75" height="6.38" fill="#80808e" opacity="0.6"/><rect x="30.83" y="22.34" width=".75" height="6.38" fill="#80808e" opacity="0.6"/><rect x="33.37" y="22.34" width=".75" height="6.38" fill="#80808e" opacity="0.6"/><rect x="35.92" y="22.34" width=".75" height="6.38" fill="#80808e" opacity="0.6"/><rect x="38.47" y="22.34" width=".75" height="6.38" fill="#80808e" opacity="0.6"/><rect x="41.02" y="22.34" width=".75" height="6.38" fill="#80808e" opacity="0.6"/><rect x="43.56" y="22.34" width=".75" height="6.38" fill="#80808e" opacity="0.6"/><rect x="46.11" y="22.34" width=".75" height="6.38" fill="#80808e" opacity="0.6"/><rect x="48.66" y="22.34" width=".75" height="6.38" fill="#80808e" opacity="0.6"/><rect x="3.43" y="11.25" width=".8" height="8.55" fill="#3e3e3e" opacity=".4"/><text x="28.4812" y="31.1" font-size="1.8" fill="#3e3e3e" text-anchor="middle" opacity=".7">AXIS TITLE</text><text x="28.4812" y="34.3" font-size="1.5" fill="#3e3e3e" text-anchor="middle" opacity=".8">Death cases &#160; Temperature at night &#160; Day Temperature</text></svg>
<svg class="r" style="left:387.50px;top:62.50px;" width="56.5" height="37.5" viewBox="0 0 56.5 37.5"><rect x=".5" y=".5" width="55.5" height="36.5" fill="#fdfdfd"/><text x="28.25" y="6.0" font-size="2.15" fill="#7a7a7a" text-anchor="middle">Rajasthan Heat Waves</text><g opacity="1"><rect x="7.51" y="19.00" width="0.82" height="5.75" fill="#7f8fbe"/><rect x="8.33" y="19.99" width="0.82" height="4.76" fill="#b3a4a8"/><rect x="9.15" y="19.36" width="0.82" height="5.39" fill="#9ea3b8"/><rect x="10.25" y="18.73" width="0.82" height="6.02" fill="#7f8fbe"/><rect x="11.07" y="20.07" width="0.82" height="4.67" fill="#b3a4a8"/><rect x="11.90" y="19.09" width="0.82" height="5.66" fill="#9ea3b8"/><rect x="12.99" y="17.48" width="0.82" height="7.27" fill="#7f8fbe"/><rect x="13.82" y="20.16" width="0.82" height="4.59" fill="#b3a4a8"/><rect x="14.64" y="18.20" width="0.82" height="6.55" fill="#9ea3b8"/><rect x="15.74" y="17.39" width="0.82" height="7.36" fill="#7f8fbe"/><rect x="16.56" y="20.16" width="0.82" height="4.59" fill="#b3a4a8"/><rect x="17.38" y="18.29" width="0.82" height="6.46" fill="#9ea3b8"/><rect x="18.48" y="17.21" width="0.82" height="7.54" fill="#7f8fbe"/><rect x="19.30" y="20.34" width="0.82" height="4.41" fill="#b3a4a8"/><rect x="20.12" y="19.27" width="0.82" height="5.48" fill="#9ea3b8"/><rect x="21.22" y="18.02" width="0.82" height="6.73" fill="#7f8fbe"/><rect x="22.04" y="20.79" width="0.82" height="3.96" fill="#b3a4a8"/><rect x="22.86" y="19.54" width="0.82" height="5.21" fill="#9ea3b8"/><rect x="23.96" y="18.82" width="0.82" height="5.93" fill="#7f8fbe"/><rect x="24.78" y="20.97" width="0.82" height="3.78" fill="#b3a4a8"/><rect x="25.61" y="20.16" width="0.82" height="4.59" fill="#9ea3b8"/><rect x="26.70" y="18.56" width="0.82" height="6.19" fill="#7f8fbe"/><rect x="27.53" y="20.61" width="0.82" height="4.14" fill="#b3a4a8"/><rect x="28.35" y="19.81" width="0.82" height="4.94" fill="#9ea3b8"/><rect x="29.44" y="18.29" width="0.82" height="6.46" fill="#7f8fbe"/><rect x="30.27" y="20.79" width="0.82" height="3.96" fill="#b3a4a8"/><rect x="31.09" y="19.99" width="0.82" height="4.76" fill="#9ea3b8"/><rect x="32.19" y="16.50" width="0.82" height="8.25" fill="#7f8fbe"/><rect x="33.01" y="20.88" width="0.82" height="3.87" fill="#b3a4a8"/><rect x="33.83" y="17.39" width="0.82" height="7.36" fill="#9ea3b8"/><rect x="34.93" y="17.48" width="0.82" height="7.27" fill="#7f8fbe"/><rect x="35.75" y="20.70" width="0.82" height="4.05" fill="#b3a4a8"/><rect x="36.57" y="18.20" width="0.82" height="6.55" fill="#9ea3b8"/><rect x="37.67" y="17.57" width="0.82" height="7.18" fill="#7f8fbe"/><rect x="38.49" y="20.43" width="0.82" height="4.32" fill="#b3a4a8"/><rect x="39.32" y="19.63" width="0.82" height="5.12" fill="#9ea3b8"/><rect x="40.41" y="18.20" width="0.82" height="6.55" fill="#7f8fbe"/><rect x="41.24" y="20.34" width="0.82" height="4.41" fill="#b3a4a8"/><rect x="42.06" y="19.45" width="0.82" height="5.30" fill="#9ea3b8"/><rect x="43.15" y="18.91" width="0.82" height="5.84" fill="#7f8fbe"/><rect x="43.98" y="20.25" width="0.82" height="4.50" fill="#b3a4a8"/><rect x="44.80" y="19.45" width="0.82" height="5.30" fill="#9ea3b8"/><rect x="45.90" y="18.29" width="0.82" height="6.46" fill="#7f8fbe"/><rect x="46.72" y="20.16" width="0.82" height="4.59" fill="#b3a4a8"/><rect x="47.54" y="19.54" width="0.82" height="5.21" fill="#9ea3b8"/><rect x="48.64" y="18.02" width="0.82" height="6.73" fill="#7f8fbe"/><rect x="49.46" y="20.34" width="0.82" height="4.41" fill="#b3a4a8"/><rect x="50.28" y="19.36" width="0.82" height="5.39" fill="#9ea3b8"/><rect x="51.38" y="17.57" width="0.82" height="7.18" fill="#7f8fbe"/><rect x="52.20" y="20.43" width="0.82" height="4.32" fill="#b3a4a8"/><rect x="53.03" y="19.09" width="0.82" height="5.66" fill="#9ea3b8"/></g><rect x="8.50" y="25.15" width=".75" height="5.62" fill="#e2b8a4" opacity="0.75"/><rect x="11.24" y="25.15" width=".75" height="5.62" fill="#e2b8a4" opacity="0.75"/><rect x="13.98" y="25.15" width=".75" height="5.62" fill="#e2b8a4" opacity="0.75"/><rect x="16.72" y="25.15" width=".75" height="5.62" fill="#e2b8a4" opacity="0.75"/><rect x="19.46" y="25.15" width=".75" height="5.62" fill="#e2b8a4" opacity="0.75"/><rect x="22.21" y="25.15" width=".75" height="5.62" fill="#e2b8a4" opacity="0.75"/><rect x="24.95" y="25.15" width=".75" height="5.62" fill="#e2b8a4" opacity="0.75"/><rect x="27.69" y="25.15" width=".75" height="5.62" fill="#e2b8a4" opacity="0.75"/><rect x="30.43" y="25.15" width=".75" height="5.62" fill="#e2b8a4" opacity="0.75"/><rect x="33.17" y="25.15" width=".75" height="5.62" fill="#e2b8a4" opacity="0.75"/><rect x="35.92" y="25.15" width=".75" height="5.62" fill="#e2b8a4" opacity="0.75"/><rect x="38.66" y="25.15" width=".75" height="5.62" fill="#e2b8a4" opacity="0.75"/><rect x="41.40" y="25.15" width=".75" height="5.62" fill="#e2b8a4" opacity="0.75"/><rect x="44.14" y="25.15" width=".75" height="5.62" fill="#e2b8a4" opacity="0.75"/><rect x="46.88" y="25.15" width=".75" height="5.62" fill="#e2b8a4" opacity="0.75"/><rect x="49.63" y="25.15" width=".75" height="5.62" fill="#e2b8a4" opacity="0.75"/><rect x="52.37" y="25.15" width=".75" height="5.62" fill="#e2b8a4" opacity="0.75"/><rect x="3.95" y="16.50" width=".8" height="6.60" fill="#7a7a7a" opacity=".4"/><text x="30.6512" y="31.1" font-size="1.8" fill="#7a7a7a" text-anchor="middle" opacity=".7">AXIS TITLE</text><text x="30.6512" y="12.9" font-size="1.5" fill="#7a7a7a" text-anchor="middle" opacity=".8">Death cases &#160; Temperature at night &#160; Day Temperature</text></svg>
<svg class="r" style="left:267px;top:65px" width="55" height="32.8" viewBox="0 0 55 32.8"><defs><radialGradient id="tg" cx="50%" cy="45%" r="70%"><stop offset="0" stop-color="#555"/><stop offset="1" stop-color="#2a2a2a"/></radialGradient></defs><rect width="55" height="32.8" fill="url(#tg)"/></svg>
<svg class="r" style="left:267.00px;top:65.00px;" width="55" height="32.8" viewBox="0 0 55 32.8"><rect x=".5" y=".5" width="54" height="31.8" fill="none"/><text x="27.5" y="5.2" font-size="2.5" font-weight="bold" fill="#f4f4f4" text-anchor="middle">Rajasthan Heat Waves</text><g opacity="1"><rect x="7.31" y="11.14" width="0.69" height="5.26" fill="#5f6c9c"/><rect x="8.11" y="12.04" width="0.69" height="4.36" fill="#6a5c5a"/><rect x="8.91" y="11.47" width="0.69" height="4.93" fill="#74747c"/><rect x="9.98" y="10.90" width="0.69" height="5.50" fill="#5f6c9c"/><rect x="10.78" y="12.13" width="0.69" height="4.27" fill="#6a5c5a"/><rect x="11.58" y="11.23" width="0.69" height="5.17" fill="#74747c"/><rect x="12.65" y="9.75" width="0.69" height="6.65" fill="#5f6c9c"/><rect x="13.45" y="12.21" width="0.69" height="4.19" fill="#6a5c5a"/><rect x="14.25" y="10.41" width="0.69" height="5.99" fill="#74747c"/><rect x="15.32" y="9.67" width="0.69" height="6.73" fill="#5f6c9c"/><rect x="16.12" y="12.21" width="0.69" height="4.19" fill="#6a5c5a"/><rect x="16.92" y="10.49" width="0.69" height="5.91" fill="#74747c"/><rect x="17.99" y="9.51" width="0.69" height="6.89" fill="#5f6c9c"/><rect x="18.79" y="12.37" width="0.69" height="4.03" fill="#6a5c5a"/><rect x="19.59" y="11.39" width="0.69" height="5.01" fill="#74747c"/><rect x="20.66" y="10.25" width="0.69" height="6.15" fill="#5f6c9c"/><rect x="21.46" y="12.78" width="0.69" height="3.62" fill="#6a5c5a"/><rect x="22.26" y="11.63" width="0.69" height="4.77" fill="#74747c"/><rect x="23.32" y="10.98" width="0.69" height="5.42" fill="#5f6c9c"/><rect x="24.13" y="12.94" width="0.69" height="3.46" fill="#6a5c5a"/><rect x="24.93" y="12.21" width="0.69" height="4.19" fill="#74747c"/><rect x="25.99" y="10.74" width="0.69" height="5.66" fill="#5f6c9c"/><rect x="26.79" y="12.62" width="0.69" height="3.78" fill="#6a5c5a"/><rect x="27.60" y="11.88" width="0.69" height="4.52" fill="#74747c"/><rect x="28.66" y="10.49" width="0.69" height="5.91" fill="#5f6c9c"/><rect x="29.46" y="12.78" width="0.69" height="3.62" fill="#6a5c5a"/><rect x="30.26" y="12.04" width="0.69" height="4.36" fill="#74747c"/><rect x="31.33" y="8.86" width="0.69" height="7.54" fill="#5f6c9c"/><rect x="32.13" y="12.86" width="0.69" height="3.54" fill="#6a5c5a"/><rect x="32.93" y="9.67" width="0.69" height="6.73" fill="#74747c"/><rect x="34.00" y="9.75" width="0.69" height="6.65" fill="#5f6c9c"/><rect x="34.80" y="12.70" width="0.69" height="3.70" fill="#6a5c5a"/><rect x="35.60" y="10.41" width="0.69" height="5.99" fill="#74747c"/><rect x="36.67" y="9.84" width="0.69" height="6.56" fill="#5f6c9c"/><rect x="37.47" y="12.45" width="0.69" height="3.95" fill="#6a5c5a"/><rect x="38.27" y="11.72" width="0.69" height="4.68" fill="#74747c"/><rect x="39.34" y="10.41" width="0.69" height="5.99" fill="#5f6c9c"/><rect x="40.14" y="12.37" width="0.69" height="4.03" fill="#6a5c5a"/><rect x="40.94" y="11.55" width="0.69" height="4.85" fill="#74747c"/><rect x="42.01" y="11.06" width="0.69" height="5.34" fill="#5f6c9c"/><rect x="42.81" y="12.29" width="0.69" height="4.11" fill="#6a5c5a"/><rect x="43.61" y="11.55" width="0.69" height="4.85" fill="#74747c"/><rect x="44.68" y="10.49" width="0.69" height="5.91" fill="#5f6c9c"/><rect x="45.48" y="12.21" width="0.69" height="4.19" fill="#6a5c5a"/><rect x="46.28" y="11.63" width="0.69" height="4.77" fill="#74747c"/><rect x="47.35" y="10.25" width="0.69" height="6.15" fill="#5f6c9c"/><rect x="48.15" y="12.37" width="0.69" height="4.03" fill="#6a5c5a"/><rect x="48.95" y="11.47" width="0.69" height="4.93" fill="#74747c"/><rect x="50.02" y="9.84" width="0.69" height="6.56" fill="#5f6c9c"/><rect x="50.82" y="12.45" width="0.69" height="3.95" fill="#6a5c5a"/><rect x="51.62" y="11.23" width="0.69" height="5.17" fill="#74747c"/></g><rect x="8.27" y="16.80" width=".75" height="8.86" fill="#ffffff" opacity="0.62"/><rect x="10.94" y="16.80" width=".75" height="8.86" fill="#ffffff" opacity="0.62"/><rect x="13.61" y="16.80" width=".75" height="8.86" fill="#ffffff" opacity="0.62"/><rect x="16.28" y="16.80" width=".75" height="8.86" fill="#ffffff" opacity="0.62"/><rect x="18.95" y="16.80" width=".75" height="8.86" fill="#ffffff" opacity="0.62"/><rect x="21.62" y="16.80" width=".75" height="8.86" fill="#ffffff" opacity="0.62"/><rect x="24.29" y="16.80" width=".75" height="8.86" fill="#ffffff" opacity="0.62"/><rect x="26.95" y="16.80" width=".75" height="8.86" fill="#ffffff" opacity="0.62"/><rect x="29.62" y="16.80" width=".75" height="8.86" fill="#ffffff" opacity="0.62"/><rect x="32.29" y="16.80" width=".75" height="8.86" fill="#ffffff" opacity="0.62"/><rect x="34.96" y="16.80" width=".75" height="8.86" fill="#ffffff" opacity="0.62"/><rect x="37.63" y="16.80" width=".75" height="8.86" fill="#ffffff" opacity="0.62"/><rect x="40.30" y="16.80" width=".75" height="8.86" fill="#ffffff" opacity="0.62"/><rect x="42.97" y="16.80" width=".75" height="8.86" fill="#ffffff" opacity="0.62"/><rect x="45.64" y="16.80" width=".75" height="8.86" fill="#ffffff" opacity="0.62"/><rect x="48.31" y="16.80" width=".75" height="8.86" fill="#ffffff" opacity="0.62"/><rect x="50.98" y="16.80" width=".75" height="8.86" fill="#ffffff" opacity="0.62"/><rect x="3.75" y="8.86" width=".8" height="6.04" fill="#f4f4f4" opacity=".4"/><text x="29.8375" y="27.2" font-size="1.8" fill="#f4f4f4" text-anchor="middle" opacity=".7">AXIS TITLE</text><text x="29.8375" y="30.0" font-size="1.5" fill="#f4f4f4" text-anchor="middle" opacity=".8">Death cases &#160; Temperature at night &#160; Day Temperature</text></svg>
<div class="r" style="left:263.70px;top:56.50px;width:61.60px;height:53.80px;background:transparent;border:2.2px solid #c9252d;"></div>
<div class="r" style="left:445.50px;top:61.60px;width:11.60px;height:41.20px;background:#fdfdfd;border:1px solid #e0e0e0;border-radius:2px;"></div>
<div class="r" style="left:445.50px;top:74.20px;width:11.60px;height:1.00px;background:#e0e0e0;"></div>
<div class="r" style="left:445.50px;top:88.20px;width:11.60px;height:1.00px;background:#e0e0e0;"></div>
<svg class="r" style="left:447.80px;top:65.60px;" width="7" height="5" viewBox="0 0 7 5"><path d="M1.5 3.4 L3.5 1.5 L5.5 3.4" fill="none" stroke="#333" stroke-width="1.25"/></svg>
<svg class="r" style="left:447.80px;top:79.00px;" width="7" height="5" viewBox="0 0 7 5"><path d="M1.5 1.4 L3.5 3.3 L5.5 1.4" fill="none" stroke="#333" stroke-width="1.25"/></svg>
<svg class="r" style="left:447.80px;top:92.00px;" width="7" height="7" viewBox="0 0 7 7"><path d="M1.4 1.2 H5.6" stroke="#333" stroke-width="1.1"/><path d="M1.5 3.4 L3.5 5.3 L5.5 3.4" fill="none" stroke="#333" stroke-width="1.25"/></svg>
<span class="t" style="left:262.20px;top:111.79px;font-size:7.60px;color:#5f5f5f;transform:scaleX(0.9132);-webkit-text-stroke:0.08px currentColor;">Chart Styles</span>
<div class="r" style="left:464.50px;top:57.00px;width:1.00px;height:58.00px;background:#e2e2e2;"></div>
<svg class="r" style="left:480.00px;top:55.00px;" width="26" height="23" viewBox="0 0 26 23"><rect x="4.30" y="6.10" width="6.50" height="4.87" fill="#4c9be0"/><rect x="10.80" y="6.10" width="6.50" height="4.87" fill="#4c9be0"/><rect x="17.30" y="6.10" width="6.50" height="4.87" fill="#4c9be0"/><rect x="4.30" y="10.97" width="6.50" height="4.87" fill="#86bff0"/><rect x="10.80" y="10.97" width="6.50" height="4.87" fill="#fefefe"/><rect x="17.30" y="10.97" width="6.50" height="4.87" fill="#fefefe"/><rect x="4.30" y="15.83" width="6.50" height="4.87" fill="#4c9be0"/><rect x="10.80" y="15.83" width="6.50" height="4.87" fill="#fefefe"/><rect x="17.30" y="15.83" width="6.50" height="4.87" fill="#fefefe"/><path d="M4.30 10.97 H23.80 M4.30 15.83 H23.80 M10.80 6.10 V20.70 M17.30 6.10 V20.70" stroke="#4a7fb5" stroke-width="0.8" fill="none"/><rect x="4.30" y="6.10" width="19.50" height="14.60" fill="none" stroke="#4a7fb5" stroke-width="1"/><rect x="3" y="1" width="9.6" height="9.4" fill="#fcfcfc"/><path d="M5 10.2 C5.2 6.4 8 4 11.6 3.6 M8.8 1.8 L12 3.5 L9.8 6.4" fill="none" stroke="#444" stroke-width="1"/><path d="M4 6 L5.2 10.4 L9 8.6" fill="none" stroke="#444" stroke-width="1"/></svg>
<span class="t" style="left:471.40px;top:82.31px;font-size:9.20px;color:#3a3a3a;transform:scaleX(0.8891);">Switch Row/</span>
<span class="t" style="left:479.20px;top:94.11px;font-size:9.20px;color:#3a3a3a;transform:scaleX(0.9084);">Column</span>
<span class="t" style="left:501.60px;top:111.79px;font-size:7.60px;color:#5f5f5f;transform:scaleX(0.8721);-webkit-text-stroke:0.08px currentColor;">Data</span>
<svg class="r" style="left:520.00px;top:58.00px;" width="27" height="23" viewBox="0 0 27 23"><rect x="3.90" y="3.10" width="6.30" height="4.87" fill="#4c9be0"/><rect x="10.20" y="3.10" width="6.30" height="4.87" fill="#4c9be0"/><rect x="16.50" y="3.10" width="6.30" height="4.87" fill="#fefefe"/><rect x="3.90" y="7.97" width="6.30" height="4.87" fill="#4c9be0"/><rect x="10.20" y="7.97" width="6.30" height="4.87" fill="#4c9be0"/><rect x="16.50" y="7.97" width="6.30" height="4.87" fill="#fefefe"/><rect x="3.90" y="12.83" width="6.30" height="4.87" fill="#86bff0"/><rect x="10.20" y="12.83" width="6.30" height="4.87" fill="#86bff0"/><rect x="16.50" y="12.83" width="6.30" height="4.87" fill="#fefefe"/><path d="M3.90 7.97 H22.80 M3.90 12.83 H22.80 M10.20 3.10 V17.70 M16.50 3.10 V17.70" stroke="#4a7fb5" stroke-width="0.8" fill="none"/><rect x="3.90" y="3.10" width="18.90" height="14.60" fill="none" stroke="#4a7fb5" stroke-width="1"/><rect x="13" y="10" width="12" height="11.6" fill="#fcfcfc"/><rect x="13.8" y="14" width="3.4" height="7" fill="#cfcfcf" stroke="#777" stroke-width=".8"/><rect x="17.2" y="10.8" width="3.4" height="10.2" fill="#fefefe" stroke="#666" stroke-width=".8"/><rect x="20.6" y="12.8" width="3.4" height="8.2" fill="#5aa4e6" stroke="#2f7fd0" stroke-width=".8"/></svg>
<span class="t" style="left:523.40px;top:82.31px;font-size:9.20px;color:#3a3a3a;transform:scaleX(0.7978);">Select</span>
<span class="t" style="left:525.00px;top:94.11px;font-size:9.20px;color:#3a3a3a;transform:scaleX(0.8645);">Data</span>
<div class="r" style="left:553.00px;top:57.00px;width:1.00px;height:58.00px;background:#e2e2e2;"></div>
<svg class="r" style="left:570.00px;top:58.50px;" width="20" height="20" viewBox="0 0 20 20"><rect x="1" y="8.2" width="5.2" height="11" fill="#d2d2d2" stroke="#7a7a7a" stroke-width="1"/><rect x="6.2" y="1" width="6" height="18.2" fill="#fefefe" stroke="#555" stroke-width="1"/><rect x="12.2" y="4" width="5.3" height="15.2" fill="#80bbf0" stroke="#2f7fd0" stroke-width="1"/></svg>
<span class="t" style="left:565.80px;top:82.31px;font-size:9.20px;color:#3a3a3a;transform:scaleX(0.8688);">Change</span>
<span class="t" style="left:560.80px;top:94.11px;font-size:9.20px;color:#3a3a3a;transform:scaleX(0.8520);">Chart Type</span>
<span class="t" style="left:573.20px;top:111.79px;font-size:7.60px;color:#5f5f5f;transform:scaleX(0.8132);-webkit-text-stroke:0.08px currentColor;">Type</span>
<div class="r" style="left:606.30px;top:57.00px;width:1.00px;height:58.00px;background:#e2e2e2;"></div>
<svg class="r" style="left:614.00px;top:58.00px;" width="26" height="23" viewBox="0 0 26 23"><path d="M2.4 1.8 H22 V18.5 H6.5 L2.4 16.6 Z" fill="#fefefe" stroke="#6e6e6e" stroke-width="1"/><path d="M2.4 6 H22 M2.4 10.2 H22 M2.4 14.4 H22 M9 1.8 V18.5 M15.5 1.8 V18.5" stroke="#8a8a8a" stroke-width=".8" fill="none"/><path d="M2.4 16.4 C4 16.6 5.6 17 6.4 18.6 C5 18.6 3.4 18.2 2.4 16.4 Z" fill="#e8e8e8" stroke="#6e6e6e" stroke-width=".7"/><rect x="11.6" y="9.4" width="12.8" height="11.8" fill="#fcfcfc"/><rect x="12.4" y="15" width="3.2" height="6" fill="#cfcfcf" stroke="#777" stroke-width=".8"/><rect x="15.6" y="10.2" width="4" height="10.8" fill="#fefefe" stroke="#666" stroke-width=".8"/><rect x="19.6" y="12.6" width="3.8" height="8.4" fill="#5aa4e6" stroke="#2f7fd0" stroke-width=".8"/></svg>
<span class="t" style="left:615.80px;top:82.31px;font-size:9.20px;color:#3a3a3a;transform:scaleX(0.9157);">Move</span>
<span class="t" style="left:617.20px;top:94.11px;font-size:9.20px;color:#3a3a3a;transform:scaleX(0.8268);">Chart</span>
<span class="t" style="left:612.80px;top:111.79px;font-size:7.60px;color:#5f5f5f;transform:scaleX(0.9327);-webkit-text-stroke:0.08px currentColor;">Location</span>
<div class="r" style="left:647.00px;top:57.00px;width:1.00px;height:58.00px;background:#e2e2e2;"></div>
<svg class="r" style="left:698.50px;top:108.50px;" width="8" height="6" viewBox="0 0 8 6"><path d="M1 1.2 L4 4.2 L7 1.2" fill="none" stroke="#444" stroke-width="1"/></svg>
</div>
<div id="sheet">
<div class="r" style="left:0.00px;top:121.20px;width:715.00px;height:278.20px;background:#ffffff;"></div>
<div class="r" style="left:0.00px;top:121.20px;width:706.00px;height:12.30px;background:#ececec;"></div>
<div class="r" style="left:0.00px;top:133.50px;width:24.40px;height:265.90px;background:#f0f0f0;"></div>
<div class="r" style="left:324.10px;top:133.50px;width:1.00px;height:265.90px;background:#e6e6e6;"></div>
<div class="r" style="left:382.90px;top:133.50px;width:1.00px;height:265.90px;background:#e6e6e6;"></div>
<div class="r" style="left:441.70px;top:133.50px;width:1.00px;height:265.90px;background:#e6e6e6;"></div>
<div class="r" style="left:500.50px;top:133.50px;width:1.00px;height:265.90px;background:#e6e6e6;"></div>
<div class="r" style="left:559.30px;top:133.50px;width:1.00px;height:265.90px;background:#e6e6e6;"></div>
<div class="r" style="left:618.10px;top:133.50px;width:1.00px;height:265.90px;background:#e6e6e6;"></div>
<div class="r" style="left:677.10px;top:133.50px;width:1.00px;height:265.90px;background:#e6e6e6;"></div>
<div class="r" style="left:735.50px;top:133.50px;width:1.00px;height:265.90px;background:#e6e6e6;"></div>
<div class="r" style="left:324.60px;top:150.07px;width:381.00px;height:1.00px;background:#e8e8e8;"></div>
<div class="r" style="left:324.60px;top:167.14px;width:381.00px;height:1.00px;background:#e8e8e8;"></div>
<div class="r" style="left:324.60px;top:184.21px;width:381.00px;height:1.00px;background:#e8e8e8;"></div>
<div class="r" style="left:324.60px;top:201.28px;width:381.00px;height:1.00px;background:#e8e8e8;"></div>
<div class="r" style="left:324.60px;top:218.35px;width:381.00px;height:1.00px;background:#e8e8e8;"></div>
<div class="r" style="left:324.60px;top:235.42px;width:381.00px;height:1.00px;background:#e8e8e8;"></div>
<div class="r" style="left:324.60px;top:252.49px;width:381.00px;height:1.00px;background:#e8e8e8;"></div>
<div class="r" style="left:324.60px;top:269.56px;width:381.00px;height:1.00px;background:#e8e8e8;"></div>
<div class="r" style="left:324.60px;top:286.63px;width:381.00px;height:1.00px;background:#e8e8e8;"></div>
<div class="r" style="left:324.60px;top:303.70px;width:381.00px;height:1.00px;background:#e8e8e8;"></div>
<div class="r" style="left:324.60px;top:320.77px;width:381.00px;height:1.00px;background:#e8e8e8;"></div>
<div class="r" style="left:324.60px;top:337.84px;width:381.00px;height:1.00px;background:#e8e8e8;"></div>
<div class="r" style="left:324.60px;top:354.91px;width:381.00px;height:1.00px;background:#e8e8e8;"></div>
<div class="r" style="left:324.60px;top:371.98px;width:381.00px;height:1.00px;background:#e8e8e8;"></div>
<div class="r" style="left:324.60px;top:389.05px;width:381.00px;height:1.00px;background:#e8e8e8;"></div>
<div class="r" style="left:23.90px;top:122.20px;width:1.00px;height:11.30px;background:#dcdcdc;"></div>
<div class="r" style="left:84.10px;top:122.20px;width:1.00px;height:11.30px;background:#dcdcdc;"></div>
<div class="r" style="left:143.30px;top:122.20px;width:1.00px;height:11.30px;background:#dcdcdc;"></div>
<div class="r" style="left:240.70px;top:122.20px;width:1.00px;height:11.30px;background:#dcdcdc;"></div>
<div class="r" style="left:324.10px;top:122.20px;width:1.00px;height:11.30px;background:#dcdcdc;"></div>
<div class="r" style="left:382.90px;top:122.20px;width:1.00px;height:11.30px;background:#dcdcdc;"></div>
<div class="r" style="left:441.70px;top:122.20px;width:1.00px;height:11.30px;background:#dcdcdc;"></div>
<div class="r" style="left:500.50px;top:122.20px;width:1.00px;height:11.30px;background:#dcdcdc;"></div>
<div class="r" style="left:559.30px;top:122.20px;width:1.00px;height:11.30px;background:#dcdcdc;"></div>
<div class="r" style="left:618.10px;top:122.20px;width:1.00px;height:11.30px;background:#dcdcdc;"></div>
<div class="r" style="left:677.10px;top:122.20px;width:1.00px;height:11.30px;background:#dcdcdc;"></div>
<div class="r" style="left:735.50px;top:122.20px;width:1.00px;height:11.30px;background:#dcdcdc;"></div>
<div class="r" style="left:0.00px;top:133.00px;width:706.00px;height:1.00px;background:#d8d8d8;"></div>
<div class="r" style="left:24.00px;top:133.50px;width:1.00px;height:265.90px;background:#d8d8d8;"></div>
<div class="r" style="left:2.00px;top:150.07px;width:22.40px;height:1.00px;background:#e6e6e6;"></div>
<div class="r" style="left:2.00px;top:167.14px;width:22.40px;height:1.00px;background:#e6e6e6;"></div>
<div class="r" style="left:2.00px;top:184.21px;width:22.40px;height:1.00px;background:#e6e6e6;"></div>
<div class="r" style="left:2.00px;top:201.28px;width:22.40px;height:1.00px;background:#e6e6e6;"></div>
<div class="r" style="left:2.00px;top:218.35px;width:22.40px;height:1.00px;background:#e6e6e6;"></div>
<div class="r" style="left:2.00px;top:235.42px;width:22.40px;height:1.00px;background:#e6e6e6;"></div>
<div class="r" style="left:2.00px;top:252.49px;width:22.40px;height:1.00px;background:#e6e6e6;"></div>
<div class="r" style="left:2.00px;top:269.56px;width:22.40px;height:1.00px;background:#e6e6e6;"></div>
<div class="r" style="left:2.00px;top:286.63px;width:22.40px;height:1.00px;background:#e6e6e6;"></div>
<div class="r" style="left:2.00px;top:303.70px;width:22.40px;height:1.00px;background:#e6e6e6;"></div>
<div class="r" style="left:2.00px;top:320.77px;width:22.40px;height:1.00px;background:#e6e6e6;"></div>
<div class="r" style="left:2.00px;top:337.84px;width:22.40px;height:1.00px;background:#e6e6e6;"></div>
<div class="r" style="left:2.00px;top:354.91px;width:22.40px;height:1.00px;background:#e6e6e6;"></div>
<div class="r" style="left:2.00px;top:371.98px;width:22.40px;height:1.00px;background:#e6e6e6;"></div>
<div class="r" style="left:2.00px;top:389.05px;width:22.40px;height:1.00px;background:#e6e6e6;"></div>
<svg class="r" style="left:10.00px;top:123.50px;" width="12" height="9" viewBox="0 0 12 9"><path d="M11.5 .5 V8.5 H1.5 Z" fill="#d2d2d2"/></svg>
<span class="t" style="left:51.06px;top:121.04px;font-size:12.00px;color:#4a4a4a;transform:scaleX(0.8600);">A</span>
<span class="t" style="left:110.76px;top:121.04px;font-size:12.00px;color:#4a4a4a;transform:scaleX(0.8600);">B</span>
<span class="t" style="left:188.77px;top:121.04px;font-size:12.00px;color:#4a4a4a;transform:scaleX(0.8600);">C</span>
<span class="t" style="left:279.17px;top:121.04px;font-size:12.00px;color:#4a4a4a;transform:scaleX(0.8600);">D</span>
<span class="t" style="left:350.56px;top:121.04px;font-size:12.00px;color:#4a4a4a;transform:scaleX(0.8600);">E</span>
<span class="t" style="left:409.65px;top:121.04px;font-size:12.00px;color:#4a4a4a;transform:scaleX(0.8600);">F</span>
<span class="t" style="left:467.59px;top:121.04px;font-size:12.00px;color:#4a4a4a;transform:scaleX(0.8600);">G</span>
<span class="t" style="left:526.67px;top:121.04px;font-size:12.00px;color:#4a4a4a;transform:scaleX(0.8600);">H</span>
<span class="t" style="left:587.77px;top:121.04px;font-size:12.00px;color:#4a4a4a;transform:scaleX(0.8600);">I</span>
<span class="t" style="left:645.52px;top:121.04px;font-size:12.00px;color:#4a4a4a;transform:scaleX(0.8600);">J</span>
<span class="t" style="left:10.37px;top:136.84px;font-size:12.40px;color:#4a4a4a;transform:scaleX(0.8800);">1</span>
<span class="t" style="left:10.37px;top:153.91px;font-size:12.40px;color:#4a4a4a;transform:scaleX(0.8800);">2</span>
<span class="t" style="left:10.37px;top:170.98px;font-size:12.40px;color:#4a4a4a;transform:scaleX(0.8800);">3</span>
<span class="t" style="left:10.37px;top:188.05px;font-size:12.40px;color:#4a4a4a;transform:scaleX(0.8800);">4</span>
<span class="t" style="left:10.37px;top:205.12px;font-size:12.40px;color:#4a4a4a;transform:scaleX(0.8800);">5</span>
<span class="t" style="left:10.37px;top:222.19px;font-size:12.40px;color:#4a4a4a;transform:scaleX(0.8800);">6</span>
<span class="t" style="left:10.37px;top:239.26px;font-size:12.40px;color:#4a4a4a;transform:scaleX(0.8800);">7</span>
<span class="t" style="left:10.37px;top:256.33px;font-size:12.40px;color:#4a4a4a;transform:scaleX(0.8800);">8</span>
<span class="t" style="left:10.37px;top:273.40px;font-size:12.40px;color:#4a4a4a;transform:scaleX(0.8800);">9</span>
<span class="t" style="left:7.33px;top:290.47px;font-size:12.40px;color:#4a4a4a;transform:scaleX(0.8800);">10</span>
<span class="t" style="left:7.74px;top:307.54px;font-size:12.40px;color:#4a4a4a;transform:scaleX(0.8800);">11</span>
<span class="t" style="left:7.33px;top:324.61px;font-size:12.40px;color:#4a4a4a;transform:scaleX(0.8800);">12</span>
<span class="t" style="left:7.33px;top:341.68px;font-size:12.40px;color:#4a4a4a;transform:scaleX(0.8800);">13</span>
<span class="t" style="left:7.33px;top:358.75px;font-size:12.40px;color:#4a4a4a;transform:scaleX(0.8800);">14</span>
<span class="t" style="left:7.33px;top:375.82px;font-size:12.40px;color:#4a4a4a;transform:scaleX(0.8800);">15</span>
<span class="t" style="left:7.33px;top:392.89px;font-size:12.40px;color:#4a4a4a;transform:scaleX(0.8800);">16</span>
<div class="r" style="left:23.90px;top:133.50px;width:1.00px;height:265.90px;background:#909090;"></div>
<div class="r" style="left:84.10px;top:133.50px;width:1.00px;height:265.90px;background:#909090;"></div>
<div class="r" style="left:143.30px;top:133.50px;width:1.00px;height:265.90px;background:#909090;"></div>
<div class="r" style="left:240.70px;top:133.50px;width:1.00px;height:265.90px;background:#909090;"></div>
<div class="r" style="left:324.10px;top:133.50px;width:1.00px;height:265.90px;background:#909090;"></div>
<div class="r" style="left:24.40px;top:133.00px;width:300.60px;height:1.00px;background:#909090;"></div>
<div class="r" style="left:24.40px;top:150.07px;width:300.60px;height:1.00px;background:#909090;"></div>
<div class="r" style="left:24.40px;top:167.14px;width:300.60px;height:1.00px;background:#909090;"></div>
<div class="r" style="left:24.40px;top:184.21px;width:300.60px;height:1.00px;background:#909090;"></div>
<div class="r" style="left:24.40px;top:201.28px;width:300.60px;height:1.00px;background:#909090;"></div>
<div class="r" style="left:24.40px;top:218.35px;width:300.60px;height:1.00px;background:#909090;"></div>
<div class="r" style="left:24.40px;top:235.42px;width:300.60px;height:1.00px;background:#909090;"></div>
<div class="r" style="left:24.40px;top:252.49px;width:300.60px;height:1.00px;background:#909090;"></div>
<div class="r" style="left:24.40px;top:269.56px;width:300.60px;height:1.00px;background:#909090;"></div>
<div class="r" style="left:24.40px;top:286.63px;width:300.60px;height:1.00px;background:#909090;"></div>
<div class="r" style="left:24.40px;top:303.70px;width:300.60px;height:1.00px;background:#909090;"></div>
<div class="r" style="left:24.40px;top:320.77px;width:300.60px;height:1.00px;background:#909090;"></div>
<div class="r" style="left:24.40px;top:337.84px;width:300.60px;height:1.00px;background:#909090;"></div>
<div class="r" style="left:24.40px;top:354.91px;width:300.60px;height:1.00px;background:#909090;"></div>
<div class="r" style="left:24.40px;top:371.98px;width:300.60px;height:1.00px;background:#909090;"></div>
<div class="r" style="left:24.40px;top:389.05px;width:300.60px;height:1.00px;background:#909090;"></div>
<span class="t" style="left:44.40px;top:139.11px;font-size:9.40px;color:#1d1d1d;font-weight:bold;transform:scaleX(1.0208);">Date</span>
<span class="t" style="left:89.00px;top:139.11px;font-size:9.40px;color:#1d1d1d;font-weight:bold;transform:scaleX(0.9186);">Death cases</span>
<span class="t" style="left:146.60px;top:139.11px;font-size:9.40px;color:#1d1d1d;font-weight:bold;transform:scaleX(0.9785);">Temperature at night</span>
<span class="t" style="left:246.40px;top:139.11px;font-size:9.40px;color:#1d1d1d;font-weight:bold;transform:scaleX(0.9671);">Day Temperature</span>
<span class="t" style="left:28.80px;top:154.16px;font-size:12.50px;color:#222;transform:scaleX(0.9131);">12-Jun-23</span>
<span class="t" style="left:107.80px;top:154.16px;font-size:12.50px;color:#222;transform:scaleX(0.9200);">32</span>
<span class="t" style="left:186.10px;top:154.16px;font-size:12.50px;color:#222;transform:scaleX(0.9200);">21</span>
<span class="t" style="left:276.50px;top:154.16px;font-size:12.50px;color:#222;transform:scaleX(0.9200);">28</span>
<span class="t" style="left:28.80px;top:171.23px;font-size:12.50px;color:#222;transform:scaleX(0.9131);">13-Jun-23</span>
<span class="t" style="left:107.80px;top:171.23px;font-size:12.50px;color:#222;transform:scaleX(0.9200);">35</span>
<span class="t" style="left:186.10px;top:171.23px;font-size:12.50px;color:#222;transform:scaleX(0.9200);">20</span>
<span class="t" style="left:276.50px;top:171.23px;font-size:12.50px;color:#222;transform:scaleX(0.9200);">31</span>
<span class="t" style="left:28.80px;top:188.30px;font-size:12.50px;color:#222;transform:scaleX(0.9131);">14-Jun-23</span>
<span class="t" style="left:107.80px;top:188.30px;font-size:12.50px;color:#222;transform:scaleX(0.9200);">49</span>
<span class="t" style="left:186.10px;top:188.30px;font-size:12.50px;color:#222;transform:scaleX(0.9200);">19</span>
<span class="t" style="left:276.50px;top:188.30px;font-size:12.50px;color:#222;transform:scaleX(0.9200);">41</span>
<span class="t" style="left:28.80px;top:205.37px;font-size:12.50px;color:#222;transform:scaleX(0.9131);">15-Jun-23</span>
<span class="t" style="left:107.80px;top:205.37px;font-size:12.50px;color:#222;transform:scaleX(0.9200);">50</span>
<span class="t" style="left:186.10px;top:205.37px;font-size:12.50px;color:#222;transform:scaleX(0.9200);">19</span>
<span class="t" style="left:276.50px;top:205.37px;font-size:12.50px;color:#222;transform:scaleX(0.9200);">40</span>
<span class="t" style="left:28.80px;top:222.44px;font-size:12.50px;color:#222;transform:scaleX(0.9131);">16-Jun-23</span>
<span class="t" style="left:107.80px;top:222.44px;font-size:12.50px;color:#222;transform:scaleX(0.9200);">52</span>
<span class="t" style="left:186.10px;top:222.44px;font-size:12.50px;color:#222;transform:scaleX(0.9200);">17</span>
<span class="t" style="left:276.50px;top:222.44px;font-size:12.50px;color:#222;transform:scaleX(0.9200);">29</span>
<span class="t" style="left:28.80px;top:239.51px;font-size:12.50px;color:#222;transform:scaleX(0.9131);">17-Jun-23</span>
<span class="t" style="left:107.80px;top:239.51px;font-size:12.50px;color:#222;transform:scaleX(0.9200);">43</span>
<span class="t" style="left:186.10px;top:239.51px;font-size:12.50px;color:#222;transform:scaleX(0.9200);">12</span>
<span class="t" style="left:276.50px;top:239.51px;font-size:12.50px;color:#222;transform:scaleX(0.9200);">26</span>
<span class="t" style="left:28.80px;top:256.58px;font-size:12.50px;color:#222;transform:scaleX(0.9131);">18-Jun-23</span>
<span class="t" style="left:107.80px;top:256.58px;font-size:12.50px;color:#222;transform:scaleX(0.9200);">34</span>
<span class="t" style="left:186.10px;top:256.58px;font-size:12.50px;color:#222;transform:scaleX(0.9200);">10</span>
<span class="t" style="left:276.50px;top:256.58px;font-size:12.50px;color:#222;transform:scaleX(0.9200);">19</span>
<span class="t" style="left:28.80px;top:273.65px;font-size:12.50px;color:#222;transform:scaleX(0.9131);">19-Jun-23</span>
<span class="t" style="left:107.80px;top:273.65px;font-size:12.50px;color:#222;transform:scaleX(0.9200);">37</span>
<span class="t" style="left:186.10px;top:273.65px;font-size:12.50px;color:#222;transform:scaleX(0.9200);">14</span>
<span class="t" style="left:276.50px;top:273.65px;font-size:12.50px;color:#222;transform:scaleX(0.9200);">23</span>
<span class="t" style="left:28.80px;top:290.72px;font-size:12.50px;color:#222;transform:scaleX(0.9131);">20-Jun-23</span>
<span class="t" style="left:107.80px;top:290.72px;font-size:12.50px;color:#222;transform:scaleX(0.9200);">40</span>
<span class="t" style="left:186.10px;top:290.72px;font-size:12.50px;color:#222;transform:scaleX(0.9200);">12</span>
<span class="t" style="left:276.50px;top:290.72px;font-size:12.50px;color:#222;transform:scaleX(0.9200);">21</span>
<span class="t" style="left:28.80px;top:307.79px;font-size:12.50px;color:#222;transform:scaleX(0.9131);">21-Jun-23</span>
<span class="t" style="left:107.80px;top:307.79px;font-size:12.50px;color:#222;transform:scaleX(0.9200);">60</span>
<span class="t" style="left:186.53px;top:307.79px;font-size:12.50px;color:#222;transform:scaleX(0.9200);">11</span>
<span class="t" style="left:276.50px;top:307.79px;font-size:12.50px;color:#222;transform:scaleX(0.9200);">50</span>
<span class="t" style="left:28.80px;top:324.86px;font-size:12.50px;color:#222;transform:scaleX(0.9131);">22-Jun-23</span>
<span class="t" style="left:107.80px;top:324.86px;font-size:12.50px;color:#222;transform:scaleX(0.9200);">49</span>
<span class="t" style="left:186.10px;top:324.86px;font-size:12.50px;color:#222;transform:scaleX(0.9200);">13</span>
<span class="t" style="left:276.50px;top:324.86px;font-size:12.50px;color:#222;transform:scaleX(0.9200);">41</span>
<span class="t" style="left:28.80px;top:341.93px;font-size:12.50px;color:#222;transform:scaleX(0.9131);">23-Jun-23</span>
<span class="t" style="left:107.80px;top:341.93px;font-size:12.50px;color:#222;transform:scaleX(0.9200);">48</span>
<span class="t" style="left:186.10px;top:341.93px;font-size:12.50px;color:#222;transform:scaleX(0.9200);">16</span>
<span class="t" style="left:276.50px;top:341.93px;font-size:12.50px;color:#222;transform:scaleX(0.9200);">25</span>
<span class="t" style="left:28.80px;top:359.00px;font-size:12.50px;color:#222;transform:scaleX(0.9131);">24-Jun-23</span>
<span class="t" style="left:107.80px;top:359.00px;font-size:12.50px;color:#222;transform:scaleX(0.9200);">41</span>
<span class="t" style="left:186.10px;top:359.00px;font-size:12.50px;color:#222;transform:scaleX(0.9200);">17</span>
<span class="t" style="left:276.50px;top:359.00px;font-size:12.50px;color:#222;transform:scaleX(0.9200);">27</span>
<span class="t" style="left:28.80px;top:376.07px;font-size:12.50px;color:#222;transform:scaleX(0.9131);">25-Jun-23</span>
<span class="t" style="left:107.80px;top:376.07px;font-size:12.50px;color:#222;transform:scaleX(0.9200);">33</span>
<span class="t" style="left:186.10px;top:376.07px;font-size:12.50px;color:#222;transform:scaleX(0.9200);">18</span>
<span class="t" style="left:276.50px;top:376.07px;font-size:12.50px;color:#222;transform:scaleX(0.9200);">27</span>
<span class="t" style="left:28.80px;top:393.14px;font-size:12.50px;color:#222;transform:scaleX(0.9131);">26-Jun-23</span>
<span class="t" style="left:107.80px;top:393.14px;font-size:12.50px;color:#222;transform:scaleX(0.9200);">40</span>
<span class="t" style="left:186.10px;top:393.14px;font-size:12.50px;color:#222;transform:scaleX(0.9200);">19</span>
<span class="t" style="left:276.50px;top:393.14px;font-size:12.50px;color:#222;transform:scaleX(0.9200);">26</span>
</div>
<svg class="r" style="left:343.50px;top:155.50px;" width="333" height="199" viewBox="0 0 333 199"><defs><radialGradient id="cg" cx="50%" cy="42%" r="75%"><stop offset="0" stop-color="#5e5e5e"/><stop offset=".5" stop-color="#4b4b4b"/><stop offset="1" stop-color="#2a2a2a"/></radialGradient>
<linearGradient id="gb" x1="0" y1="0" x2="0" y2="1"><stop offset="0" stop-color="#5b86d6"/><stop offset="1" stop-color="#3a62ad"/></linearGradient>
<linearGradient id="go" x1="0" y1="0" x2="0" y2="1"><stop offset="0" stop-color="#f79a5c"/><stop offset="1" stop-color="#e0701f"/></linearGradient>
<linearGradient id="gg" x1="0" y1="0" x2="0" y2="1"><stop offset="0" stop-color="#c2c2c2"/><stop offset="1" stop-color="#9a9a9a"/></linearGradient>
<filter id="bl" x="-5%" y="-5%" width="110%" height="110%"><feGaussianBlur stdDeviation=".35"/></filter></defs><rect x="0" y="0" width="333" height="199" fill="url(#cg)"/><rect x="39.80" y="114.30" width="281.35" height=".8" fill="#8a8a8a"/><text x="32.40" y="117.60" font-size="8.2" fill="#d2d2d2" text-anchor="end" textLength="4.1" lengthAdjust="spacingAndGlyphs">0</text><rect x="39.80" y="105.60" width="281.35" height=".8" fill="#5b5b5b"/><text x="32.40" y="108.90" font-size="8.2" fill="#d2d2d2" text-anchor="end" textLength="8.3" lengthAdjust="spacingAndGlyphs">10</text><rect x="39.80" y="96.90" width="281.35" height=".8" fill="#5b5b5b"/><text x="32.40" y="100.20" font-size="8.2" fill="#d2d2d2" text-anchor="end" textLength="8.3" lengthAdjust="spacingAndGlyphs">20</text><rect x="39.80" y="88.20" width="281.35" height=".8" fill="#5b5b5b"/><text x="32.40" y="91.50" font-size="8.2" fill="#d2d2d2" text-anchor="end" textLength="8.3" lengthAdjust="spacingAndGlyphs">30</text><rect x="39.80" y="79.50" width="281.35" height=".8" fill="#5b5b5b"/><text x="32.40" y="82.80" font-size="8.2" fill="#d2d2d2" text-anchor="end" textLength="8.3" lengthAdjust="spacingAndGlyphs">40</text><rect x="39.80" y="70.80" width="281.35" height=".8" fill="#5b5b5b"/><text x="32.40" y="74.10" font-size="8.2" fill="#d2d2d2" text-anchor="end" textLength="8.3" lengthAdjust="spacingAndGlyphs">50</text><rect x="39.80" y="62.10" width="281.35" height=".8" fill="#5b5b5b"/><text x="32.40" y="65.40" font-size="8.2" fill="#d2d2d2" text-anchor="end" textLength="8.3" lengthAdjust="spacingAndGlyphs">60</text><rect x="39.80" y="53.40" width="281.35" height=".8" fill="#5b5b5b"/><text x="32.40" y="56.70" font-size="8.2" fill="#d2d2d2" text-anchor="end" textLength="8.3" lengthAdjust="spacingAndGlyphs">70</text><rect x="39.40" y="114.70" width=".8" height="2" fill="#9c9c9c"/><rect x="55.95" y="114.70" width=".8" height="2" fill="#9c9c9c"/><rect x="72.50" y="114.70" width=".8" height="2" fill="#9c9c9c"/><rect x="89.05" y="114.70" width=".8" height="2" fill="#9c9c9c"/><rect x="105.60" y="114.70" width=".8" height="2" fill="#9c9c9c"/><rect x="122.15" y="114.70" width=".8" height="2" fill="#9c9c9c"/><rect x="138.70" y="114.70" width=".8" height="2" fill="#9c9c9c"/><rect x="155.25" y="114.70" width=".8" height="2" fill="#9c9c9c"/><rect x="171.80" y="114.70" width=".8" height="2" fill="#9c9c9c"/><rect x="188.35" y="114.70" width=".8" height="2" fill="#9c9c9c"/><rect x="204.90" y="114.70" width=".8" height="2" fill="#9c9c9c"/><rect x="221.45" y="114.70" width=".8" height="2" fill="#9c9c9c"/><rect x="238.00" y="114.70" width=".8" height="2" fill="#9c9c9c"/><rect x="254.55" y="114.70" width=".8" height="2" fill="#9c9c9c"/><rect x="271.10" y="114.70" width=".8" height="2" fill="#9c9c9c"/><rect x="287.65" y="114.70" width=".8" height="2" fill="#9c9c9c"/><rect x="304.20" y="114.70" width=".8" height="2" fill="#9c9c9c"/><rect x="320.75" y="114.70" width=".8" height="2" fill="#9c9c9c"/><g filter="url(#bl)"><rect x="41.00" y="87.46" width="5.4" height="27.24" fill="#1f1f2a" opacity=".55"/><rect x="41.40" y="86.86" width="4.1" height="27.84" fill="url(#gb)"/><rect x="45.80" y="97.03" width="5.4" height="17.67" fill="#1f1f2a" opacity=".55"/><rect x="46.20" y="96.43" width="4.1" height="18.27" fill="url(#go)"/><rect x="50.60" y="90.94" width="5.4" height="23.76" fill="#1f1f2a" opacity=".55"/><rect x="51.00" y="90.34" width="4.1" height="24.36" fill="url(#gg)"/><rect x="57.55" y="84.85" width="5.4" height="29.85" fill="#1f1f2a" opacity=".55"/><rect x="57.95" y="84.25" width="4.1" height="30.45" fill="url(#gb)"/><rect x="62.35" y="97.90" width="5.4" height="16.80" fill="#1f1f2a" opacity=".55"/><rect x="62.75" y="97.30" width="4.1" height="17.40" fill="url(#go)"/><rect x="67.15" y="88.33" width="5.4" height="26.37" fill="#1f1f2a" opacity=".55"/><rect x="67.55" y="87.73" width="4.1" height="26.97" fill="url(#gg)"/><rect x="74.10" y="72.67" width="5.4" height="42.03" fill="#1f1f2a" opacity=".55"/><rect x="74.50" y="72.07" width="4.1" height="42.63" fill="url(#gb)"/><rect x="78.90" y="98.77" width="5.4" height="15.93" fill="#1f1f2a" opacity=".55"/><rect x="79.30" y="98.17" width="4.1" height="16.53" fill="url(#go)"/><rect x="83.70" y="79.63" width="5.4" height="35.07" fill="#1f1f2a" opacity=".55"/><rect x="84.10" y="79.03" width="4.1" height="35.67" fill="url(#gg)"/><rect x="90.65" y="71.80" width="5.4" height="42.90" fill="#1f1f2a" opacity=".55"/><rect x="91.05" y="71.20" width="4.1" height="43.50" fill="url(#gb)"/><rect x="95.45" y="98.77" width="5.4" height="15.93" fill="#1f1f2a" opacity=".55"/><rect x="95.85" y="98.17" width="4.1" height="16.53" fill="url(#go)"/><rect x="100.25" y="80.50" width="5.4" height="34.20" fill="#1f1f2a" opacity=".55"/><rect x="100.65" y="79.90" width="4.1" height="34.80" fill="url(#gg)"/><rect x="107.20" y="70.06" width="5.4" height="44.64" fill="#1f1f2a" opacity=".55"/><rect x="107.60" y="69.46" width="4.1" height="45.24" fill="url(#gb)"/><rect x="112.00" y="100.51" width="5.4" height="14.19" fill="#1f1f2a" opacity=".55"/><rect x="112.40" y="99.91" width="4.1" height="14.79" fill="url(#go)"/><rect x="116.80" y="90.07" width="5.4" height="24.63" fill="#1f1f2a" opacity=".55"/><rect x="117.20" y="89.47" width="4.1" height="25.23" fill="url(#gg)"/><rect x="123.75" y="77.89" width="5.4" height="36.81" fill="#1f1f2a" opacity=".55"/><rect x="124.15" y="77.29" width="4.1" height="37.41" fill="url(#gb)"/><rect x="128.55" y="104.86" width="5.4" height="9.84" fill="#1f1f2a" opacity=".55"/><rect x="128.95" y="104.26" width="4.1" height="10.44" fill="url(#go)"/><rect x="133.35" y="92.68" width="5.4" height="22.02" fill="#1f1f2a" opacity=".55"/><rect x="133.75" y="92.08" width="4.1" height="22.62" fill="url(#gg)"/><rect x="140.30" y="85.72" width="5.4" height="28.98" fill="#1f1f2a" opacity=".55"/><rect x="140.70" y="85.12" width="4.1" height="29.58" fill="url(#gb)"/><rect x="145.10" y="106.60" width="5.4" height="8.10" fill="#1f1f2a" opacity=".55"/><rect x="145.50" y="106.00" width="4.1" height="8.70" fill="url(#go)"/><rect x="149.90" y="98.77" width="5.4" height="15.93" fill="#1f1f2a" opacity=".55"/><rect x="150.30" y="98.17" width="4.1" height="16.53" fill="url(#gg)"/><rect x="156.85" y="83.11" width="5.4" height="31.59" fill="#1f1f2a" opacity=".55"/><rect x="157.25" y="82.51" width="4.1" height="32.19" fill="url(#gb)"/><rect x="161.65" y="103.12" width="5.4" height="11.58" fill="#1f1f2a" opacity=".55"/><rect x="162.05" y="102.52" width="4.1" height="12.18" fill="url(#go)"/><rect x="166.45" y="95.29" width="5.4" height="19.41" fill="#1f1f2a" opacity=".55"/><rect x="166.85" y="94.69" width="4.1" height="20.01" fill="url(#gg)"/><rect x="173.40" y="80.50" width="5.4" height="34.20" fill="#1f1f2a" opacity=".55"/><rect x="173.80" y="79.90" width="4.1" height="34.80" fill="url(#gb)"/><rect x="178.20" y="104.86" width="5.4" height="9.84" fill="#1f1f2a" opacity=".55"/><rect x="178.60" y="104.26" width="4.1" height="10.44" fill="url(#go)"/><rect x="183.00" y="97.03" width="5.4" height="17.67" fill="#1f1f2a" opacity=".55"/><rect x="183.40" y="96.43" width="4.1" height="18.27" fill="url(#gg)"/><rect x="189.95" y="63.10" width="5.4" height="51.60" fill="#1f1f2a" opacity=".55"/><rect x="190.35" y="62.50" width="4.1" height="52.20" fill="url(#gb)"/><rect x="194.75" y="105.73" width="5.4" height="8.97" fill="#1f1f2a" opacity=".55"/><rect x="195.15" y="105.13" width="4.1" height="9.57" fill="url(#go)"/><rect x="199.55" y="71.80" width="5.4" height="42.90" fill="#1f1f2a" opacity=".55"/><rect x="199.95" y="71.20" width="4.1" height="43.50" fill="url(#gg)"/><rect x="206.50" y="72.67" width="5.4" height="42.03" fill="#1f1f2a" opacity=".55"/><rect x="206.90" y="72.07" width="4.1" height="42.63" fill="url(#gb)"/><rect x="211.30" y="103.99" width="5.4" height="10.71" fill="#1f1f2a" opacity=".55"/><rect x="211.70" y="103.39" width="4.1" height="11.31" fill="url(#go)"/><rect x="216.10" y="79.63" width="5.4" height="35.07" fill="#1f1f2a" opacity=".55"/><rect x="216.50" y="79.03" width="4.1" height="35.67" fill="url(#gg)"/><rect x="223.05" y="73.54" width="5.4" height="41.16" fill="#1f1f2a" opacity=".55"/><rect x="223.45" y="72.94" width="4.1" height="41.76" fill="url(#gb)"/><rect x="227.85" y="101.38" width="5.4" height="13.32" fill="#1f1f2a" opacity=".55"/><rect x="228.25" y="100.78" width="4.1" height="13.92" fill="url(#go)"/><rect x="232.65" y="93.55" width="5.4" height="21.15" fill="#1f1f2a" opacity=".55"/><rect x="233.05" y="92.95" width="4.1" height="21.75" fill="url(#gg)"/><rect x="239.60" y="79.63" width="5.4" height="35.07" fill="#1f1f2a" opacity=".55"/><rect x="240.00" y="79.03" width="4.1" height="35.67" fill="url(#gb)"/><rect x="244.40" y="100.51" width="5.4" height="14.19" fill="#1f1f2a" opacity=".55"/><rect x="244.80" y="99.91" width="4.1" height="14.79" fill="url(#go)"/><rect x="249.20" y="91.81" width="5.4" height="22.89" fill="#1f1f2a" opacity=".55"/><rect x="249.60" y="91.21" width="4.1" height="23.49" fill="url(#gg)"/><rect x="256.15" y="86.59" width="5.4" height="28.11" fill="#1f1f2a" opacity=".55"/><rect x="256.55" y="85.99" width="4.1" height="28.71" fill="url(#gb)"/><rect x="260.95" y="99.64" width="5.4" height="15.06" fill="#1f1f2a" opacity=".55"/><rect x="261.35" y="99.04" width="4.1" height="15.66" fill="url(#go)"/><rect x="265.75" y="91.81" width="5.4" height="22.89" fill="#1f1f2a" opacity=".55"/><rect x="266.15" y="91.21" width="4.1" height="23.49" fill="url(#gg)"/><rect x="272.70" y="80.50" width="5.4" height="34.20" fill="#1f1f2a" opacity=".55"/><rect x="273.10" y="79.90" width="4.1" height="34.80" fill="url(#gb)"/><rect x="277.50" y="98.77" width="5.4" height="15.93" fill="#1f1f2a" opacity=".55"/><rect x="277.90" y="98.17" width="4.1" height="16.53" fill="url(#go)"/><rect x="282.30" y="92.68" width="5.4" height="22.02" fill="#1f1f2a" opacity=".55"/><rect x="282.70" y="92.08" width="4.1" height="22.62" fill="url(#gg)"/><rect x="289.25" y="77.89" width="5.4" height="36.81" fill="#1f1f2a" opacity=".55"/><rect x="289.65" y="77.29" width="4.1" height="37.41" fill="url(#gb)"/><rect x="294.05" y="100.51" width="5.4" height="14.19" fill="#1f1f2a" opacity=".55"/><rect x="294.45" y="99.91" width="4.1" height="14.79" fill="url(#go)"/><rect x="298.85" y="90.94" width="5.4" height="23.76" fill="#1f1f2a" opacity=".55"/><rect x="299.25" y="90.34" width="4.1" height="24.36" fill="url(#gg)"/><rect x="305.80" y="73.54" width="5.4" height="41.16" fill="#1f1f2a" opacity=".55"/><rect x="306.20" y="72.94" width="4.1" height="41.76" fill="url(#gb)"/><rect x="310.60" y="101.38" width="5.4" height="13.32" fill="#1f1f2a" opacity=".55"/><rect x="311.00" y="100.78" width="4.1" height="13.92" fill="url(#go)"/><rect x="315.40" y="88.33" width="5.4" height="26.37" fill="#1f1f2a" opacity=".55"/><rect x="315.80" y="87.73" width="4.1" height="26.97" fill="url(#gg)"/></g><text transform="translate(50.88 152.70) rotate(-90)" font-size="7.3" font-weight="bold" fill="#cfcfcf" textLength="33.5" lengthAdjust="spacingAndGlyphs">12-Jun-23</text><text transform="translate(67.43 152.70) rotate(-90)" font-size="7.3" font-weight="bold" fill="#cfcfcf" textLength="33.5" lengthAdjust="spacingAndGlyphs">13-Jun-23</text><text transform="translate(83.98 152.70) rotate(-90)" font-size="7.3" font-weight="bold" fill="#cfcfcf" textLength="33.5" lengthAdjust="spacingAndGlyphs">14-Jun-23</text><text transform="translate(100.53 152.70) rotate(-90)" font-size="7.3" font-weight="bold" fill="#cfcfcf" textLength="33.5" lengthAdjust="spacingAndGlyphs">15-Jun-23</text><text transform="translate(117.07 152.70) rotate(-90)" font-size="7.3" font-weight="bold" fill="#cfcfcf" textLength="33.5" lengthAdjust="spacingAndGlyphs">16-Jun-23</text><text transform="translate(133.62 152.70) rotate(-90)" font-size="7.3" font-weight="bold" fill="#cfcfcf" textLength="33.5" lengthAdjust="spacingAndGlyphs">17-Jun-23</text><text transform="translate(150.18 152.70) rotate(-90)" font-size="7.3" font-weight="bold" fill="#cfcfcf" textLength="33.5" lengthAdjust="spacingAndGlyphs">18-Jun-23</text><text transform="translate(166.73 152.70) rotate(-90)" font-size="7.3" font-weight="bold" fill="#cfcfcf" textLength="33.5" lengthAdjust="spacingAndGlyphs">19-Jun-23</text><text transform="translate(183.27 152.70) rotate(-90)" font-size="7.3" font-weight="bold" fill="#cfcfcf" textLength="33.5" lengthAdjust="spacingAndGlyphs">20-Jun-23</text><text transform="translate(199.82 152.70) rotate(-90)" font-size="7.3" font-weight="bold" fill="#cfcfcf" textLength="33.5" lengthAdjust="spacingAndGlyphs">21-Jun-23</text><text transform="translate(216.37 152.70) rotate(-90)" font-size="7.3" font-weight="bold" fill="#cfcfcf" textLength="33.5" lengthAdjust="spacingAndGlyphs">22-Jun-23</text><text transform="translate(232.92 152.70) rotate(-90)" font-size="7.3" font-weight="bold" fill="#cfcfcf" textLength="33.5" lengthAdjust="spacingAndGlyphs">23-Jun-23</text><text transform="translate(249.48 152.70) rotate(-90)" font-size="7.3" font-weight="bold" fill="#cfcfcf" textLength="33.5" lengthAdjust="spacingAndGlyphs">24-Jun-23</text><text transform="translate(266.02 152.70) rotate(-90)" font-size="7.3" font-weight="bold" fill="#cfcfcf" textLength="33.5" lengthAdjust="spacingAndGlyphs">25-Jun-23</text><text transform="translate(282.57 152.70) rotate(-90)" font-size="7.3" font-weight="bold" fill="#cfcfcf" textLength="33.5" lengthAdjust="spacingAndGlyphs">26-Jun-23</text><text transform="translate(299.12 152.70) rotate(-90)" font-size="7.3" font-weight="bold" fill="#cfcfcf" textLength="33.5" lengthAdjust="spacingAndGlyphs">27-Jun-23</text><text transform="translate(315.67 152.70) rotate(-90)" font-size="7.3" font-weight="bold" fill="#cfcfcf" textLength="33.5" lengthAdjust="spacingAndGlyphs">28-Jun-23</text><text x="166.70" y="21.10" font-size="13" font-weight="bold" fill="#000" opacity=".45" text-anchor="middle" textLength="153.6" lengthAdjust="spacing" aria-hidden="true">Rajasthan Heat Waves</text><text x="166.00" y="20.30" font-size="13" font-weight="bold" fill="#f2f2f2" text-anchor="middle" textLength="153.6" lengthAdjust="spacing">Rajasthan Heat Waves</text><text x="180.50" y="162.90" font-size="6.6" font-weight="bold" fill="#e0e0e0" text-anchor="middle" textLength="36" lengthAdjust="spacingAndGlyphs">AXIS TITLE</text><text transform="translate(18.50 84.50) rotate(-90)" font-size="6.6" font-weight="bold" fill="#e0e0e0" text-anchor="middle" textLength="36" lengthAdjust="spacingAndGlyphs">AXIS TITLE</text><rect x="58.90" y="183.10" width="4" height="4" fill="#4472c4"/><text x="65.70" y="187.40" font-size="7.4" fill="#d9d9d9" textLength="40.4" lengthAdjust="spacingAndGlyphs">Death cases</text><rect x="117.50" y="183.10" width="4" height="4" fill="#ed7d31"/><text x="124.90" y="187.40" font-size="7.4" fill="#d9d9d9" textLength="72.4" lengthAdjust="spacingAndGlyphs">Temperature at night</text><rect x="209.50" y="183.10" width="4" height="4" fill="#a5a5a5"/><text x="217.10" y="187.40" font-size="7.4" fill="#d9d9d9" textLength="58.4" lengthAdjust="spacingAndGlyphs">Day Temperature</text></svg>
<div class="r" style="left:343.00px;top:155.00px;width:334.00px;height:200.00px;background:transparent;border:1px solid #8f8f8f;"></div>
<div class="r" style="left:339.90px;top:151.90px;width:7.20px;height:7.20px;background:#fff;border:1.1px solid #4a4a4a;border-radius:50%;"></div>
<div class="r" style="left:339.90px;top:251.40px;width:7.20px;height:7.20px;background:#fff;border:1.1px solid #4a4a4a;border-radius:50%;"></div>
<div class="r" style="left:339.90px;top:350.90px;width:7.20px;height:7.20px;background:#fff;border:1.1px solid #4a4a4a;border-radius:50%;"></div>
<div class="r" style="left:506.40px;top:151.90px;width:7.20px;height:7.20px;background:#fff;border:1.1px solid #4a4a4a;border-radius:50%;"></div>
<div class="r" style="left:506.40px;top:350.90px;width:7.20px;height:7.20px;background:#fff;border:1.1px solid #4a4a4a;border-radius:50%;"></div>
<div class="r" style="left:672.90px;top:151.90px;width:7.20px;height:7.20px;background:#fff;border:1.1px solid #4a4a4a;border-radius:50%;"></div>
<div class="r" style="left:672.90px;top:251.40px;width:7.20px;height:7.20px;background:#fff;border:1.1px solid #4a4a4a;border-radius:50%;"></div>
<div class="r" style="left:672.90px;top:350.90px;width:7.20px;height:7.20px;background:#fff;border:1.1px solid #4a4a4a;border-radius:50%;"></div>
<div class="r" style="left:263.00px;top:121.60px;width:30.20px;height:17.80px;background:#fdfdfd;border:1px solid #8c8c8c;border-radius:3px;"></div>
<span class="t" style="left:266.40px;top:126.80px;font-size:8.60px;color:#616161;transform:scaleX(0.8976);-webkit-text-stroke:0.05px currentColor;">Style 8</span>
<div class="r" style="left:706.60px;top:121.40px;width:8.40px;height:278.00px;background:#f1f1f1;"></div>
<div class="r" style="left:708.30px;top:129.20px;width:5.20px;height:199.00px;background:#6e6e6e;border-radius:2.6px;"></div>
<svg class="r" style="left:707.00px;top:121.00px;" width="8" height="5" viewBox="0 0 8 5"><path d="M.6 4.6 L4 .6 L7.4 4.6 Z" fill="#6e6e6e"/></svg>
<svg class="r" style="left:707.00px;top:391.50px;" width="8" height="5" viewBox="0 0 8 5"><path d="M.6 .4 L4 4.4 L7.4 .4 Z" fill="#6e6e6e"/></svg>
<div id="tabbar">
<div class="r" style="left:0.00px;top:399.40px;width:715.00px;height:21.40px;background:#f1f1f1;"></div>
<svg class="r" style="left:17.00px;top:404.50px;" width="6" height="9" viewBox="0 0 6 9"><path d="M4.6 1 L1.2 4.5 L4.6 8" fill="none" stroke="#b5b5b5" stroke-width="1"/></svg>
<svg class="r" style="left:40.00px;top:404.50px;" width="6" height="9" viewBox="0 0 6 9"><path d="M1.4 1 L4.8 4.5 L1.4 8" fill="none" stroke="#b5b5b5" stroke-width="1"/></svg>
<span class="t" style="left:83.80px;top:405.11px;font-size:9.60px;color:#3d3d3d;transform:scaleX(0.9334);">Sheet1</span>
<span class="t" style="left:129.80px;top:405.11px;font-size:9.60px;color:#3d3d3d;transform:scaleX(0.9531);">Sheet2</span>
<div class="r" style="left:120.40px;top:403.50px;width:1.00px;height:12.00px;background:#dedede;"></div>
<div class="r" style="left:171.60px;top:399.40px;width:41.40px;height:18.20px;background:#fbfbfb;border-radius:0 0 3px 3px;"></div>
<span class="t" style="left:176.40px;top:403.31px;font-size:9.60px;color:#333;transform:scaleX(0.9728);-webkit-text-stroke:0.5px currentColor;">Sheet3</span>
<div class="r" style="left:176.40px;top:413.80px;width:29.60px;height:1.50px;background:#217346;"></div>
<svg class="r" style="left:243.00px;top:405.00px;" width="9" height="9" viewBox="0 0 9 9"><path d="M4.5 .5 V8.5 M.5 4.5 H8.5" stroke="#777" stroke-width="1"/></svg>
<div class="r" style="left:433.40px;top:405.60px;width:1.40px;height:1.40px;background:#555;border-radius:50%;"></div>
<div class="r" style="left:433.40px;top:408.80px;width:1.40px;height:1.40px;background:#555;border-radius:50%;"></div>
<div class="r" style="left:433.40px;top:412.00px;width:1.40px;height:1.40px;background:#555;border-radius:50%;"></div>
<svg class="r" style="left:447.50px;top:405.50px;" width="6" height="8" viewBox="0 0 6 8"><path d="M5.4 .4 V7.6 L.6 4 Z" fill="#555"/></svg>
<svg class="r" style="left:696.00px;top:405.50px;" width="6" height="8" viewBox="0 0 6 8"><path d="M.6 .4 V7.6 L5.4 4 Z" fill="#555"/></svg>
<div class="r" style="left:457.60px;top:406.60px;width:215.00px;height:5.00px;background:#6b6b6b;border-radius:2.5px;"></div>
</div>
<div id="statusbar">
<div class="r" style="left:0.00px;top:420.40px;width:715.00px;height:16.20px;background:#f1f3f1;"></div>
<span class="t" style="left:10.20px;top:424.89px;font-size:8.00px;color:#4a4a4a;transform:scaleX(0.8302);">Ready</span>
<svg class="r" style="left:41.50px;top:424.30px;" width="11" height="9" viewBox="0 0 11 9"><rect x=".6" y=".6" width="9.6" height="7.8" fill="none" stroke="#3c3c3c" stroke-width="1.1"/><rect x=".6" y=".6" width="9.6" height="2" fill="#3c3c3c"/><rect x="2" y="4" width="2.2" height="1.8" fill="none" stroke="#3c3c3c" stroke-width=".8"/><circle cx="6.9" cy="6" r="2.3" fill="#f1f3f1" stroke="#3c3c3c" stroke-width=".9"/><circle cx="6.9" cy="6" r="1" fill="#3c3c3c"/></svg>
<svg class="r" style="left:63.60px;top:424.00px;" width="11" height="10" viewBox="0 0 11 10"><circle cx="4.8" cy="1.7" r="1.3" fill="none" stroke="#3c3c3c" stroke-width="1"/><path d="M.8 3.6 C2.6 4.4 7 4.4 8.8 3.6" fill="none" stroke="#3c3c3c" stroke-width="1.2"/><path d="M3.4 4.2 V6.2 L1.8 9.4 M6.2 4.2 V6 L7 7" fill="none" stroke="#3c3c3c" stroke-width="1.1"/><path d="M6.4 6.6 L9.6 9.6 M9.6 6.6 L6.4 9.6" stroke="#3c3c3c" stroke-width="1"/></svg>
<span class="t" style="left:76.00px;top:424.89px;font-size:8.00px;color:#4a4a4a;transform:scaleX(0.8788);">Accessibility: Investigate</span>
<div class="r" style="left:505.50px;top:421.40px;width:25.50px;height:14.40px;background:#e3e3e3;"></div>
<svg class="r" style="left:513.50px;top:424.00px;" width="10" height="9" viewBox="0 0 10 9"><rect x=".6" y=".6" width="8.8" height="7.8" fill="none" stroke="#333" stroke-width="1"/><path d="M.6 3.2 H9.4 M.6 5.8 H9.4 M3.6 .6 V8.4 M6.6 .6 V8.4" stroke="#333" stroke-width=".8"/></svg>
<svg class="r" style="left:541.50px;top:424.00px;" width="10" height="9" viewBox="0 0 10 9"><rect x=".6" y=".6" width="8.8" height="7.8" fill="none" stroke="#444" stroke-width="1"/><rect x="2.8" y="2.6" width="4.4" height="4" fill="none" stroke="#444" stroke-width=".8"/></svg>
<svg class="r" style="left:568.50px;top:424.00px;" width="10" height="9" viewBox="0 0 10 9"><rect x=".6" y=".6" width="8.8" height="7.8" fill="none" stroke="#444" stroke-width="1"/><path d="M3.4 .6 V4.6 H6.8 V.6" fill="none" stroke="#444" stroke-width=".8"/></svg>
<div class="r" style="left:591.60px;top:428.20px;width:5.00px;height:1.00px;background:#8a8a8a;"></div>
<div class="r" style="left:601.00px;top:428.20px;width:67.00px;height:1.00px;background:#9a9a9a;"></div>
<div class="r" style="left:633.20px;top:424.60px;width:3.00px;height:8.00px;background:#5e5e5e;border-radius:1px;"></div>
<svg class="r" style="left:671.50px;top:425.50px;" width="7" height="7" viewBox="0 0 7 7"><path d="M3.5 .5 V6.5 M.5 3.5 H6.5" stroke="#8a8a8a" stroke-width="1"/></svg>
<span class="t" style="left:686.60px;top:424.89px;font-size:8.00px;color:#4a4a4a;transform:scaleX(0.8699);">100%</span>
</div>
<div class="r" style="left:1.80px;top:-4.00px;width:730.00px;height:440.40px;background:transparent;border-radius:5.5px;box-shadow:0 0 0 1px #5e9173,0 0 0 30px #c3cfc6;pointer-events:none;"></div>
<div class="r" style="left:0.00px;top:439.40px;width:715.00px;height:3.00px;background:#9aa39d;"></div>
<div class="r" style="left:0.00px;top:0.00px;width:0.80px;height:433.00px;background:#d9e6de;"></div>
<div class="r" style="left:423.30px;top:30.40px;width:77.00px;height:26.20px;background:transparent;border:2.2px solid #c9252d;"></div>
<div class="r" style="left:589.00px;top:438.60px;width:8.00px;height:1.60px;background:#66736b;border-radius:1px;opacity:.8;"></div>
<div class="r" style="left:638.00px;top:438.60px;width:5.00px;height:1.60px;background:#66736b;border-radius:1px;opacity:.8;"></div>
<div class="r" style="left:664.00px;top:438.60px;width:9.00px;height:1.60px;background:#66736b;border-radius:1px;opacity:.8;"></div>
<div class="r" style="left:690.00px;top:438.60px;width:11.00px;height:1.60px;background:#66736b;border-radius:1px;opacity:.8;"></div>
<div class="r" style="left:118.00px;top:438.60px;width:12.00px;height:1.60px;background:#66736b;border-radius:1px;opacity:.8;"></div>
<div class="r" style="left:30.00px;top:438.60px;width:6.00px;height:1.60px;background:#66736b;border-radius:1px;opacity:.8;"></div>
</body></html>
